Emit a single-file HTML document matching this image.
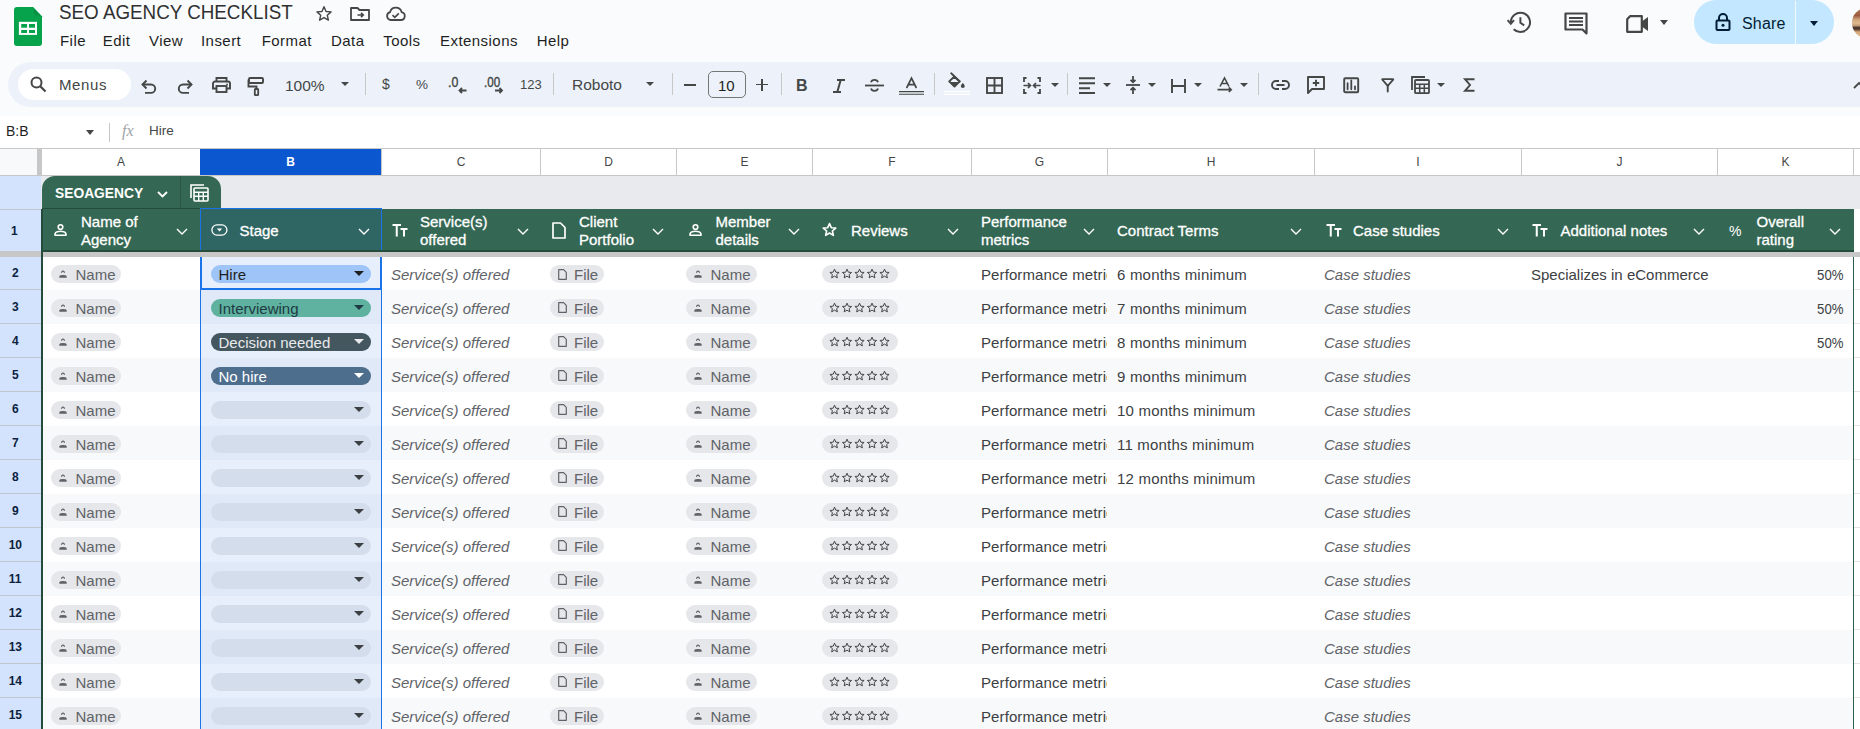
<!DOCTYPE html><html><head><meta charset="utf-8"><style>
*{margin:0;padding:0;box-sizing:border-box}
html,body{width:1860px;height:729px;overflow:hidden}
body{background:#f9fbfd;font-family:"Liberation Sans", sans-serif;position:relative;color:#1f1f1f}
.a{position:absolute}
.t{position:absolute;white-space:nowrap;line-height:1}
svg{position:absolute;overflow:visible}
.menu{font-size:15px;color:#1f1f1f;letter-spacing:0.45px}
.tb{position:absolute;left:8px;top:62px;width:1900px;height:45px;background:#edf2fa;border-radius:23px}
.sep{position:absolute;top:73px;width:1px;height:22px;background:#c7c7c7}
.tri{position:absolute;width:0;height:0;border-left:4.5px solid transparent;border-right:4.5px solid transparent;border-top:4.5px solid #444746}
.colh{position:absolute;top:148px;height:27px;background:#fff;border-top:1px solid #c7c7c7;border-bottom:1px solid #c7c7c7;border-left:1px solid #c7c7c7;font-size:12px;color:#444746;text-align:center;line-height:26px}
.rowh{position:absolute;left:0;width:41px;background:#d3e3fd;border-bottom:1px solid #c0c6ce;font-size:12px;font-weight:bold;color:#1f1f1f}
.row{position:absolute;left:43px;width:1810px;height:34px}
.chip{position:absolute;height:18px;border-radius:9px;background:#e6e7ea;font-size:15px;color:#5f6368;line-height:18px}
.cell{position:absolute;font-size:15px;letter-spacing:0.1px;line-height:1;white-space:nowrap;overflow:hidden}
.hd{position:absolute;color:#fff;font-size:15px;line-height:18px;white-space:nowrap;-webkit-text-stroke:0.3px #fff}
</style></head><body><svg style="left:14px;top:7px" width="28" height="39" viewBox="0 0 28 39">
<path d="M3 0H19.2L28 9.3V36A3 3 0 0 1 25 39H3A3 3 0 0 1 0 36V3A3 3 0 0 1 3 0Z" fill="#07a24c"/>
<path d="M19.5 2.5L25.5 8.5M19.5 5L23 8.5" stroke="#1c5a33" stroke-width="0.8" opacity="0.7"/>
<rect x="4.9" y="14.8" width="18.1" height="13.1" fill="#fff"/>
<rect x="7.2" y="17" width="5.9" height="3.7" fill="#07a24c"/><rect x="15" y="17" width="6" height="3.7" fill="#07a24c"/>
<rect x="7.2" y="23" width="5.9" height="3" fill="#07a24c"/><rect x="15" y="23" width="6" height="3" fill="#07a24c"/>
</svg>
<div class="t" style="left:58.5px;top:1.6px;font-size:20px;color:#303030;transform-origin:0 0;transform:scaleX(0.94)">SEO AGENCY CHECKLIST</div>
<svg style="left:314px;top:5px" width="20" height="17" viewBox="0 0 24 24"><path d="M12 2.5l2.9 6.6 7.1.6-5.4 4.7 1.6 7-6.2-3.7-6.2 3.7 1.6-7L2 9.7l7.1-.6z" fill="none" stroke="#444746" stroke-width="2" stroke-linejoin="round"/></svg>
<svg style="left:350px;top:7px" width="20" height="14" viewBox="0 0 20 14"><path d="M1 1H7.5L9.5 3H19V13H1Z" fill="none" stroke="#444746" stroke-width="1.8" stroke-linejoin="round"/><path d="M7.5 8H13M11 5.8L13.3 8 11 10.2" fill="none" stroke="#444746" stroke-width="1.6"/></svg>
<svg style="left:385px;top:7px" width="21" height="14" viewBox="0 0 21 14"><path d="M5.5 13H16a4 4 0 0 0 .6-7.9A6 6 0 0 0 5 5.2 4 4 0 0 0 5.5 13Z" fill="none" stroke="#444746" stroke-width="1.8"/><path d="M7.5 8.2l2.3 2.2 4-4" fill="none" stroke="#444746" stroke-width="1.6"/></svg>
<div class="t menu" style="left:60px;top:33px">File</div>
<div class="t menu" style="left:102.7px;top:33px">Edit</div>
<div class="t menu" style="left:149px;top:33px">View</div>
<div class="t menu" style="left:201px;top:33px">Insert</div>
<div class="t menu" style="left:261.7px;top:33px">Format</div>
<div class="t menu" style="left:331px;top:33px">Data</div>
<div class="t menu" style="left:383.3px;top:33px">Tools</div>
<div class="t menu" style="left:440px;top:33px">Extensions</div>
<div class="t menu" style="left:536.7px;top:33px">Help</div>
<svg style="left:1507px;top:10px" width="26" height="25" viewBox="0 0 26 25"><path d="M3.8 12.3A9.6 9.6 0 1 1 6.7 19.2" fill="none" stroke="#444746" stroke-width="2"/><path d="M0.6 10.2L3.8 13.8 7 10.2" fill="none" stroke="#444746" stroke-width="2"/><path d="M13.4 7.2V12.8L17.2 15.3" fill="none" stroke="#444746" stroke-width="2"/></svg>
<svg style="left:1564px;top:12px" width="24" height="23" viewBox="0 0 24 23"><path d="M1.5 1.5H22.5V21.5L18.5 17.5H1.5Z" fill="none" stroke="#444746" stroke-width="2.2" stroke-linejoin="round"/><rect x="5" y="5" width="14" height="2" fill="#444746"/><rect x="5" y="8.5" width="14" height="2" fill="#444746"/><rect x="5" y="12" width="14" height="2" fill="#444746"/></svg>
<svg style="left:1625px;top:15px" width="24" height="18" viewBox="0 0 24 18"><path d="M5 1.2H16.8V16.8H2.2V4.2Z" fill="none" stroke="#444746" stroke-width="2.2" stroke-linejoin="round"/><path d="M16.8 6.5L23 2V16L16.8 11.5Z" fill="#444746"/></svg>
<div class="tri" style="left:1660px;top:20px;border-width:5px 4px 0 4px;border-top-color:#444746"></div>
<div class="a" style="left:1694px;top:-0.5px;width:140px;height:44.5px;border-radius:22.3px;background:#c2e7ff"></div>
<div class="a" style="left:1795px;top:1px;width:1px;height:43px;background:#f0f8ff"></div>
<svg style="left:1715px;top:13px" width="16" height="18" viewBox="0 0 16 18"><path d="M4 7.5V5a4 4 0 0 1 8 0v2.5" fill="none" stroke="#001d35" stroke-width="2"/><rect x="1.5" y="7.5" width="13" height="9.5" rx="1" fill="none" stroke="#001d35" stroke-width="2"/><circle cx="8" cy="12.2" r="1.5" fill="#001d35"/></svg>
<div class="t" style="left:1742px;top:16px;font-size:16px;color:#001d35;letter-spacing:0.2px">Share</div>
<div class="tri" style="left:1810px;top:21px;border-width:5px 4.5px 0 4.5px;border-top-color:#001d35"></div>
<div class="a" style="left:1852px;top:8.3px;width:29.5px;height:29.5px;border-radius:50%;background:linear-gradient(180deg,#b47a5c 0%,#9a5a3e 25%,#cfa27a 38%,#e0bb90 50%,#c79f7a 58%,#3b2c26 66%,#6a4a38 72%,#d7ab7c 80%,#e3b584 100%)"></div>
<div class="tb"></div>
<div class="a" style="left:18px;top:69px;width:113px;height:31px;border-radius:16px;background:#fff"></div>
<svg style="left:30px;top:76px" width="17" height="17" viewBox="0 0 17 17"><circle cx="6.5" cy="6.5" r="5" fill="none" stroke="#444746" stroke-width="2"/><path d="M10.2 10.2L15.5 15.5" stroke="#444746" stroke-width="2.2"/></svg>
<div class="t" style="left:59px;top:77px;font-size:15px;color:#444746;letter-spacing:0.6px">Menus</div>
<svg style="left:141px;top:79px" width="16" height="14" viewBox="0 0 16 14"><path d="M2 5.5H10a4.2 4.2 0 0 1 0 8.4H4" fill="none" stroke="#444746" stroke-width="1.9"/><path d="M5.5 1.5L1.5 5.5 5.5 9.5" fill="none" stroke="#444746" stroke-width="1.9"/></svg>
<svg style="left:177px;top:79px" width="16" height="14" viewBox="0 0 16 14"><path d="M14 5.5H6a4.2 4.2 0 0 0 0 8.4H12" fill="none" stroke="#444746" stroke-width="1.9"/><path d="M10.5 1.5L14.5 5.5 10.5 9.5" fill="none" stroke="#444746" stroke-width="1.9"/></svg>
<svg style="left:212px;top:77px" width="19" height="16" viewBox="0 0 19 16"><path d="M4.5 4.5V1h10v3.5" fill="none" stroke="#444746" stroke-width="1.9"/><path d="M4.5 11.5H1V6.5a2 2 0 0 1 2-2h13a2 2 0 0 1 2 2v5h-3.5" fill="none" stroke="#444746" stroke-width="1.9"/><rect x="4.5" y="9" width="10" height="6" fill="none" stroke="#444746" stroke-width="1.9"/><circle cx="15" cy="7.3" r="0.9" fill="#444746"/></svg>
<svg style="left:248px;top:77px" width="16" height="19" viewBox="0 0 16 19"><rect x="1" y="1" width="14" height="5" rx="1" fill="none" stroke="#444746" stroke-width="1.9"/><path d="M1 3.5H0.5V9.5H8.5V12" fill="none" stroke="#444746" stroke-width="1.9"/><rect x="6.8" y="12" width="3.4" height="6.2" rx="0.6" fill="none" stroke="#444746" stroke-width="1.8"/></svg>
<div class="t" style="left:285px;top:78px;font-size:15.5px;color:#444746">100%</div>
<div class="tri" style="left:341px;top:82px"></div>
<div class="sep" style="left:365px"></div>
<div class="t" style="left:382px;top:77px;font-size:14px;color:#444746">$</div>
<div class="t" style="left:416px;top:78px;font-size:13.5px;color:#444746">%</div>
<svg style="left:448px;top:75px" width="21" height="19" viewBox="0 0 21 19"><text x="0" y="12" font-family="Liberation Sans" font-size="14.5" fill="#444746" transform="scale(0.85,1)" stroke="#444746" stroke-width="0.4">.0</text><path d="M18.5 15.5H11.5M14 13L11.5 15.5 14 18" fill="none" stroke="#444746" stroke-width="1.8"/></svg>
<svg style="left:484px;top:75px" width="21" height="19" viewBox="0 0 21 19"><text x="0" y="12" font-family="Liberation Sans" font-size="14.5" fill="#444746" transform="scale(0.8,1)" stroke="#444746" stroke-width="0.4">.00</text><path d="M11 15.5H18M15.5 13L18 15.5 15.5 18" fill="none" stroke="#444746" stroke-width="1.8"/></svg>
<div class="t" style="left:520px;top:78px;font-size:13px;color:#444746">123</div>
<div class="sep" style="left:553px"></div>
<div class="t" style="left:572px;top:77px;font-size:15.5px;color:#444746">Roboto</div>
<div class="tri" style="left:646px;top:82px"></div>
<div class="sep" style="left:672px"></div>
<div class="a" style="left:684px;top:84px;width:12px;height:1.8px;background:#444746"></div>
<div class="a" style="left:708px;top:71px;width:38px;height:27px;border:1.2px solid #747775;border-radius:5px"></div>
<div class="t" style="left:718px;top:78px;font-size:15px;color:#1f1f1f">10</div>
<div class="a" style="left:756px;top:83.6px;width:12px;height:1.8px;background:#444746"></div><div class="a" style="left:761.1px;top:78.5px;width:1.8px;height:12px;background:#444746"></div>
<div class="sep" style="left:781px"></div>
<div class="t" style="left:796px;top:78px;font-size:16px;font-weight:bold;color:#444746">B</div>
<svg style="left:832px;top:78.6px" width="14" height="14" viewBox="0 0 14 14"><path d="M5 1H13M1 13H9M8.7 1L5.3 13" fill="none" stroke="#444746" stroke-width="2"/></svg>
<svg style="left:865px;top:78px" width="19" height="15" viewBox="0 0 19 15"><path d="M0 7.5H19" stroke="#444746" stroke-width="1.8"/><path d="M13 4.2a3.6 3 0 0 0-7 0M6 10.5a3.6 3 0 0 0 7 0" fill="none" stroke="#444746" stroke-width="1.8"/></svg>
<svg style="left:899px;top:77px" width="25" height="18" viewBox="0 0 25 18"><path d="M7.6 11L12.5 1.2 17.4 11M9.3 7.6H15.7" fill="none" stroke="#444746" stroke-width="1.7"/><path d="M0 14.6H25M0 17.3H25" stroke="#444746" stroke-width="1.05"/></svg>
<div class="sep" style="left:934px"></div>
<svg style="left:944px;top:72px" width="27" height="24" viewBox="0 0 27 24"><path d="M7.2 1.3L15.7 9.4" stroke="#444746" stroke-width="1.9" stroke-linecap="round"/><path d="M5.2 9.4L10.2 4.8 15.7 9.4 10.5 14.6Z" fill="none" stroke="#444746" stroke-width="1.9" stroke-linejoin="round"/><path d="M5 9.9H15.6L10.5 14.8Z" fill="#444746"/><path d="M18.8 11C19.9 12.2 20.8 13.2 20.8 14.1a2 2 0 0 1-4 0C16.8 13.2 17.7 12.2 18.8 11Z" fill="#444746"/><path d="M0 19.6H26M0 22.4H26" stroke="#fff" stroke-width="1.3"/></svg>
<svg style="left:986px;top:77px" width="17" height="17" viewBox="0 0 17 17"><rect x="1" y="1" width="15" height="15" fill="none" stroke="#444746" stroke-width="1.9"/><path d="M8.5 1V16M1 8.5H16" stroke="#444746" stroke-width="1.9"/></svg>
<svg style="left:1023px;top:77px" width="18" height="17" viewBox="0 0 18 17"><path d="M3.5 1H1V5M1 12V16H3.5M14.5 1H17V5M17 12V16H14.5" fill="none" stroke="#444746" stroke-width="1.8"/><path d="M0.5 8.5H7.5M5 6L7.5 8.5 5 11M17.5 8.5H10.5M13 6L10.5 8.5 13 11" fill="none" stroke="#444746" stroke-width="1.7"/></svg>
<div class="tri" style="left:1051px;top:83px"></div>
<div class="sep" style="left:1067px"></div>
<svg style="left:1079px;top:77px" width="16" height="17" viewBox="0 0 16 17"><path d="M0 1.2H16M0 6.2H16M0 11.2H11M0 16H16" stroke="#444746" stroke-width="2"/></svg>
<div class="tri" style="left:1103px;top:83px"></div>
<svg style="left:1126px;top:76px" width="14" height="18" viewBox="0 0 14 18"><path d="M0 9H14" stroke="#444746" stroke-width="1.8"/><path d="M7 0V6M4.5 3.8L7 6.3 9.5 3.8M7 18V12M4.5 14.2L7 11.7 9.5 14.2" fill="none" stroke="#444746" stroke-width="1.8"/></svg>
<div class="tri" style="left:1148px;top:83px"></div>
<svg style="left:1171px;top:79px" width="15" height="14" viewBox="0 0 15 14"><path d="M1 0V14M14 0V14M1 7H14" stroke="#444746" stroke-width="1.9"/></svg>
<div class="tri" style="left:1194px;top:83px"></div>
<svg style="left:1217px;top:77px" width="16" height="16" viewBox="0 0 16 16"><path d="M3 9.5L7.5 1 12 9.5M4.6 6.5H10.4" fill="none" stroke="#444746" stroke-width="1.6"/><path d="M0.5 12.7H14M11.8 10.4L14.2 12.7 11.8 15" fill="none" stroke="#444746" stroke-width="1.7"/></svg>
<div class="tri" style="left:1240px;top:83px"></div>
<div class="sep" style="left:1258px"></div>
<svg style="left:1271px;top:80px" width="19" height="10" viewBox="0 0 19 10"><path d="M8 1H5a4 4 0 0 0 0 8h3M11 1h3a4 4 0 0 1 0 8h-3M5.5 5H13.5" fill="none" stroke="#444746" stroke-width="1.9"/></svg>
<svg style="left:1307px;top:76px" width="18" height="18" viewBox="0 0 18 18"><path d="M1 17V1H17V13H5Z" fill="none" stroke="#444746" stroke-width="1.9" stroke-linejoin="round"/><path d="M9 3.8V10.2M5.8 7H12.2" stroke="#444746" stroke-width="1.9"/></svg>
<svg style="left:1343px;top:77px" width="17" height="17" viewBox="0 0 17 17"><rect x="1.2" y="1.2" width="14" height="14" rx="1" fill="none" stroke="#444746" stroke-width="1.9"/><path d="M4.6 6.2V12.3M8.3 3.5V12.3M12 9.3V12.3" stroke="#444746" stroke-width="1.8" stroke-linecap="round"/></svg>
<svg style="left:1381px;top:78px" width="14" height="14" viewBox="0 0 14 14"><path d="M0.9 1.1H12.6L6.75 7.8Z" fill="none" stroke="#444746" stroke-width="1.8" stroke-linejoin="bevel"/><path d="M6.75 7.5V13.5" stroke="#444746" stroke-width="1.9" stroke-linecap="round"/></svg>
<svg style="left:1411px;top:76px" width="19" height="18" viewBox="0 0 19 18"><path d="M1 14V1H14" fill="none" stroke="#444746" stroke-width="1.8"/><rect x="4" y="4" width="14" height="13.2" rx="1" fill="none" stroke="#444746" stroke-width="1.8"/><path d="M4 8.3H18M4 12.2H18M8.7 8.3V17M13.3 8.3V17" stroke="#444746" stroke-width="1.5"/></svg>
<div class="tri" style="left:1437px;top:83px"></div>
<svg style="left:1464px;top:78px" width="11" height="14" viewBox="0 0 11 14"><path d="M10.5 1.2H1L6 7 1 12.8H10.5" fill="none" stroke="#444746" stroke-width="1.9"/></svg>
<svg style="left:1853px;top:82px" width="12" height="7" viewBox="0 0 12 7"><path d="M1 6L6 1 11 6" fill="none" stroke="#444746" stroke-width="1.8"/></svg>
<div class="a" style="left:0;top:116px;width:1860px;height:33px;background:#fff"></div>
<div class="t" style="left:6px;top:124px;font-size:14px;color:#1f1f1f">B:B</div>
<div class="tri" style="left:86px;top:130px;border-width:5px 4.5px 0 4.5px"></div>
<div class="a" style="left:109px;top:123px;width:1px;height:19px;background:#c7c7c7"></div>
<div class="t" style="left:122px;top:123px;font-size:16px;font-style:italic;color:#a0a4a8;font-family:'Liberation Serif',serif">fx</div>
<div class="t" style="left:149px;top:124px;font-size:13.5px;color:#444746">Hire</div>
<div class="a" style="left:0;top:148px;width:1860px;height:1px;background:#c7c7c7"></div>
<div class="a" style="left:0;top:149px;width:37px;height:26px;background:#f8f9fa"></div>
<div class="a" style="left:37px;top:149px;width:4.5px;height:26px;background:#c7c7c7"></div>
<div class="a" style="left:41px;top:149px;width:159px;height:26px;background:#fff;border-left:1px solid #c7c7c7;color:#444746;font-size:12px;text-align:center;line-height:26px">A</div>
<div class="a" style="left:200px;top:149px;width:181px;height:26px;background:#0b57d0;color:#fff;font-size:12px;font-weight:bold;text-align:center;line-height:26px">B</div>
<div class="a" style="left:381px;top:149px;width:159px;height:26px;background:#fff;border-left:1px solid #c7c7c7;color:#444746;font-size:12px;text-align:center;line-height:26px">C</div>
<div class="a" style="left:540px;top:149px;width:136px;height:26px;background:#fff;border-left:1px solid #c7c7c7;color:#444746;font-size:12px;text-align:center;line-height:26px">D</div>
<div class="a" style="left:676px;top:149px;width:136px;height:26px;background:#fff;border-left:1px solid #c7c7c7;color:#444746;font-size:12px;text-align:center;line-height:26px">E</div>
<div class="a" style="left:812px;top:149px;width:159px;height:26px;background:#fff;border-left:1px solid #c7c7c7;color:#444746;font-size:12px;text-align:center;line-height:26px">F</div>
<div class="a" style="left:971px;top:149px;width:136px;height:26px;background:#fff;border-left:1px solid #c7c7c7;color:#444746;font-size:12px;text-align:center;line-height:26px">G</div>
<div class="a" style="left:1107px;top:149px;width:207px;height:26px;background:#fff;border-left:1px solid #c7c7c7;color:#444746;font-size:12px;text-align:center;line-height:26px">H</div>
<div class="a" style="left:1314px;top:149px;width:207px;height:26px;background:#fff;border-left:1px solid #c7c7c7;color:#444746;font-size:12px;text-align:center;line-height:26px">I</div>
<div class="a" style="left:1521px;top:149px;width:196px;height:26px;background:#fff;border-left:1px solid #c7c7c7;color:#444746;font-size:12px;text-align:center;line-height:26px">J</div>
<div class="a" style="left:1717px;top:149px;width:136px;height:26px;background:#fff;border-left:1px solid #c7c7c7;color:#444746;font-size:12px;text-align:center;line-height:26px">K</div>
<div class="a" style="left:1853px;top:149px;width:47px;height:26px;background:#fff;border-left:1px solid #c7c7c7;color:#444746;font-size:12px;text-align:center;line-height:26px"></div>
<div class="a" style="left:0;top:175px;width:1860px;height:1px;background:#c7c7c7"></div>
<div class="a" style="left:0;top:176px;width:41px;height:33px;background:#d3e3fd"></div>
<div class="a" style="left:0;top:209px;width:41px;height:1px;background:#c0c6ce"></div>
<div class="a" style="left:41px;top:176px;width:1819px;height:33px;background:#e8eaed"></div>
<div class="a" style="left:42px;top:176px;width:179px;height:34px;background:#356854;border-radius:13px 13px 0 0"></div>
<div class="a" style="left:180px;top:176px;width:1px;height:33px;background:#2a5443"></div>
<div class="t" style="left:55px;top:186.5px;font-size:13.8px;font-weight:bold;color:#fff">SEOAGENCY</div>
<svg style="left:157px;top:191px" width="11" height="7" viewBox="0 0 11 7"><path d="M1 1L5.5 5.5 10 1" fill="none" stroke="#fff" stroke-width="1.8"/></svg>
<svg style="left:190px;top:184px" width="19" height="18" viewBox="0 0 19 18"><path d="M1 14V1H14" fill="none" stroke="#fff" stroke-width="1.6"/><rect x="4" y="4" width="14" height="13" rx="1" fill="none" stroke="#fff" stroke-width="1.6"/><path d="M4 8.3H18M4 12.2H18M8.7 8.3V17M13.3 8.3V17" stroke="#fff" stroke-width="1.4"/></svg>
<div class="a" style="left:0;top:210px;width:41px;height:41px;background:#d3e3fd"></div>
<div class="t" style="left:11px;top:225px;font-size:12px;font-weight:bold;color:#0b1f3f">1</div>
<div class="a" style="left:41px;top:208.5px;width:1813px;height:42.5px;background:#356854"></div>
<div class="a" style="left:42px;top:208px;width:179px;height:1.2px;background:#254b3b"></div>
<div class="a" style="left:200px;top:208px;width:182px;height:43px;background:#2f6563;border-left:1.3px solid #1a73e8;border-right:1.3px solid #1a73e8;border-top:1.3px solid #1a73e8"></div>
<svg style="left:53.5px;top:224px" width="13" height="12" viewBox="0 0 13 12"><circle cx="6.5" cy="3" r="2.3" fill="none" stroke="#fff" stroke-width="1.6"/><path d="M1 11.2V10a3 3 0 0 1 2.2-2.3 13 13 0 0 1 6.6 0A3 3 0 0 1 12 10v1.2Z" fill="none" stroke="#fff" stroke-width="1.6" stroke-linejoin="round"/></svg>
<div class="hd" style="left:81px;top:212.5px">Name of<br>Agency</div>
<svg style="left:176px;top:228px" width="12" height="7" viewBox="0 0 12 7"><path d="M1 1L6 6 11 1" fill="none" stroke="#fff" stroke-width="1.4"/></svg>
<svg style="left:211px;top:224px" width="17" height="12" viewBox="0 0 17 12"><rect x="0.9" y="0.9" width="15" height="10.2" rx="5" fill="none" stroke="#fff" stroke-width="1.3"/><path d="M5.8 4.6H11.2L8.5 7.4Z" fill="#fff"/></svg>
<div class="hd" style="left:239.5px;top:221.5px">Stage</div>
<svg style="left:357.5px;top:228px" width="12" height="7" viewBox="0 0 12 7"><path d="M1 1L6 6 11 1" fill="none" stroke="#fff" stroke-width="1.4"/></svg>
<svg style="left:392px;top:224px" width="16" height="13" viewBox="0 0 16 13"><path d="M0.5 1H9M4.75 1V12.5M8.5 5H15.5M12 5V12.5" fill="none" stroke="#fff" stroke-width="2"/></svg>
<div class="hd" style="left:420px;top:212.5px">Service(s)<br>offered</div>
<svg style="left:516.5px;top:228px" width="12" height="7" viewBox="0 0 12 7"><path d="M1 1L6 6 11 1" fill="none" stroke="#fff" stroke-width="1.4"/></svg>
<svg style="left:552px;top:222px" width="14" height="17" viewBox="0 0 14 17"><path d="M1 1H8.5L13 5.5V16H1Z" fill="none" stroke="#fff" stroke-width="1.7" stroke-linejoin="round"/></svg>
<div class="hd" style="left:579px;top:212.5px">Client<br>Portfolio</div>
<svg style="left:652px;top:228px" width="12" height="7" viewBox="0 0 12 7"><path d="M1 1L6 6 11 1" fill="none" stroke="#fff" stroke-width="1.4"/></svg>
<svg style="left:688.5px;top:224px" width="13" height="12" viewBox="0 0 13 12"><circle cx="6.5" cy="3" r="2.3" fill="none" stroke="#fff" stroke-width="1.6"/><path d="M1 11.2V10a3 3 0 0 1 2.2-2.3 13 13 0 0 1 6.6 0A3 3 0 0 1 12 10v1.2Z" fill="none" stroke="#fff" stroke-width="1.6" stroke-linejoin="round"/></svg>
<div class="hd" style="left:715.5px;top:212.5px">Member<br>details</div>
<svg style="left:788px;top:228px" width="12" height="7" viewBox="0 0 12 7"><path d="M1 1L6 6 11 1" fill="none" stroke="#fff" stroke-width="1.4"/></svg>
<svg style="left:822px;top:222px" width="15" height="15" viewBox="0 0 24 24"><path d="M12 2.5l2.9 6.6 7.1.6-5.4 4.7 1.6 7-6.2-3.7-6.2 3.7 1.6-7L2 9.7l7.1-.6z" fill="none" stroke="#fff" stroke-width="2.6" stroke-linejoin="round"/></svg>
<div class="hd" style="left:851px;top:221.5px">Reviews</div>
<svg style="left:947px;top:228px" width="12" height="7" viewBox="0 0 12 7"><path d="M1 1L6 6 11 1" fill="none" stroke="#fff" stroke-width="1.4"/></svg>
<div class="hd" style="left:981px;top:212.5px">Performance<br>metrics</div>
<svg style="left:1083px;top:228px" width="12" height="7" viewBox="0 0 12 7"><path d="M1 1L6 6 11 1" fill="none" stroke="#fff" stroke-width="1.4"/></svg>
<div class="hd" style="left:1117px;top:221.5px">Contract Terms</div>
<svg style="left:1290px;top:228px" width="12" height="7" viewBox="0 0 12 7"><path d="M1 1L6 6 11 1" fill="none" stroke="#fff" stroke-width="1.4"/></svg>
<svg style="left:1325.5px;top:224px" width="16" height="13" viewBox="0 0 16 13"><path d="M0.5 1H9M4.75 1V12.5M8.5 5H15.5M12 5V12.5" fill="none" stroke="#fff" stroke-width="2"/></svg>
<div class="hd" style="left:1353px;top:221.5px">Case studies</div>
<svg style="left:1497px;top:228px" width="12" height="7" viewBox="0 0 12 7"><path d="M1 1L6 6 11 1" fill="none" stroke="#fff" stroke-width="1.4"/></svg>
<svg style="left:1532px;top:224px" width="16" height="13" viewBox="0 0 16 13"><path d="M0.5 1H9M4.75 1V12.5M8.5 5H15.5M12 5V12.5" fill="none" stroke="#fff" stroke-width="2"/></svg>
<div class="hd" style="left:1560.5px;top:221.5px">Additional notes</div>
<svg style="left:1693px;top:228px" width="12" height="7" viewBox="0 0 12 7"><path d="M1 1L6 6 11 1" fill="none" stroke="#fff" stroke-width="1.4"/></svg>
<div class="t" style="left:1729px;top:224px;font-size:14px;color:#fff">%</div>
<div class="hd" style="left:1756.5px;top:212.5px">Overall<br>rating</div>
<svg style="left:1829px;top:228px" width="12" height="7" viewBox="0 0 12 7"><path d="M1 1L6 6 11 1" fill="none" stroke="#fff" stroke-width="1.4"/></svg>
<div class="a" style="left:41px;top:250.2px;width:1813px;height:1.4px;background:#254b3b"></div>
<div class="a" style="left:0;top:251.6px;width:1860px;height:5.4px;background:#c7c7c7"></div>
<div class="a" style="left:0;top:251px;width:41px;height:6px;background:#c7c7c7"></div>
<div class="a" style="left:0;top:257px;width:41px;height:33.4px;background:#d3e3fd"></div>
<div class="a" style="left:0;top:289.40px;width:41px;height:1px;background:#c0c6ce"></div>
<div class="t" style="left:12.1px;top:266.90px;font-size:12px;font-weight:bold;color:#0b1f3f">2</div>
<div class="a" style="left:43px;top:257px;width:1810px;height:33.4px;background:#fff"></div>
<div class="a" style="left:200px;top:257px;width:181px;height:33.4px;background:#e7effc"></div>
<div class="chip" style="left:51px;top:265.1px;width:70px"></div>
<svg style="left:59px;top:270.0px" width="8" height="8" viewBox="0 0 8 8"><path d="M2.7 2.8a1.35 1.35 0 1 1 2.6 0" fill="none" stroke="#5f6368" stroke-width="1.1"/><path d="M0.3 7.7V6.6a1.6 1.6 0 0 1 1.2-1.4 10 10 0 0 1 5 0 1.6 1.6 0 0 1 1.2 1.4v1.1Z" fill="#5f6368"/></svg>
<div class="t" style="left:75.5px;top:267.40px;font-size:15px;color:#5f6368">Name</div>
<div class="chip" style="left:211px;top:265.1px;width:160px;background:#9fc5f8"></div>
<div class="t" style="left:218.5px;top:267.40px;font-size:15px;color:#1f1f1f">Hire</div>
<div class="tri" style="left:353.7px;top:271.40px;border-width:5.1px 5.2px 0 5.2px;border-top-color:#1f1f1f"></div>
<div class="t" style="left:391px;top:267.40px;font-size:15px;font-style:italic;color:#5f6368">Service(s) offered</div>
<div class="chip" style="left:550px;top:265.1px;width:54px"></div>
<svg style="left:558px;top:268.7px" width="9" height="11" viewBox="0 0 9 11"><path d="M0.7 0.7H5.6L8.3 3.4V10.3H0.7Z" fill="none" stroke="#5f6368" stroke-width="1.2" stroke-linejoin="round"/></svg>
<div class="t" style="left:574px;top:267.40px;font-size:15px;color:#5f6368">File</div>
<div class="chip" style="left:686px;top:265.1px;width:70.5px"></div>
<svg style="left:694px;top:270.0px" width="8" height="8" viewBox="0 0 8 8"><path d="M2.7 2.8a1.35 1.35 0 1 1 2.6 0" fill="none" stroke="#5f6368" stroke-width="1.1"/><path d="M0.3 7.7V6.6a1.6 1.6 0 0 1 1.2-1.4 10 10 0 0 1 5 0 1.6 1.6 0 0 1 1.2 1.4v1.1Z" fill="#5f6368"/></svg>
<div class="t" style="left:710.5px;top:267.40px;font-size:15px;color:#5f6368">Name</div>
<div class="chip" style="left:822px;top:265.1px;width:75.5px"></div>
<svg style="left:829.2px;top:268.40px" width="62" height="12" viewBox="0 0 62 12"><path transform="translate(0.0,0) scale(0.46)" d="M12 2.5l2.9 6.6 7.1.6-5.4 4.7 1.6 7-6.2-3.7-6.2 3.7 1.6-7L2 9.7l7.1-.6z" fill="none" stroke="#3c4043" stroke-width="2.1" stroke-linejoin="miter"/><path transform="translate(12.5,0) scale(0.46)" d="M12 2.5l2.9 6.6 7.1.6-5.4 4.7 1.6 7-6.2-3.7-6.2 3.7 1.6-7L2 9.7l7.1-.6z" fill="none" stroke="#3c4043" stroke-width="2.1" stroke-linejoin="miter"/><path transform="translate(25.0,0) scale(0.46)" d="M12 2.5l2.9 6.6 7.1.6-5.4 4.7 1.6 7-6.2-3.7-6.2 3.7 1.6-7L2 9.7l7.1-.6z" fill="none" stroke="#3c4043" stroke-width="2.1" stroke-linejoin="miter"/><path transform="translate(37.5,0) scale(0.46)" d="M12 2.5l2.9 6.6 7.1.6-5.4 4.7 1.6 7-6.2-3.7-6.2 3.7 1.6-7L2 9.7l7.1-.6z" fill="none" stroke="#3c4043" stroke-width="2.1" stroke-linejoin="miter"/><path transform="translate(50.0,0) scale(0.46)" d="M12 2.5l2.9 6.6 7.1.6-5.4 4.7 1.6 7-6.2-3.7-6.2 3.7 1.6-7L2 9.7l7.1-.6z" fill="none" stroke="#3c4043" stroke-width="2.1" stroke-linejoin="miter"/></svg>
<div class="cell" style="left:981px;top:266.40px;width:125.6px;height:17px;color:#3c4043;line-height:17px">Performance metrics</div>
<div class="t" style="left:1117px;top:267.40px;font-size:15px;letter-spacing:0.2px;color:#3c4043">6 months minimum</div>
<div class="t" style="left:1324px;top:267.40px;font-size:15px;font-style:italic;color:#5f6368">Case studies</div>
<div class="t" style="left:1531px;top:267.40px;font-size:15px;color:#3c4043">Specializes in eCommerce</div>
<div class="t" style="left:1800px;width:43.5px;text-align:right;top:267.40px;font-size:15px;color:#3c4043;transform-origin:100% 0;transform:scaleX(0.88)">50%</div>
<div class="a" style="left:0;top:290.4px;width:41px;height:34.0px;background:#d3e3fd"></div>
<div class="a" style="left:0;top:323.40px;width:41px;height:1px;background:#c0c6ce"></div>
<div class="t" style="left:12.1px;top:300.60px;font-size:12px;font-weight:bold;color:#0b1f3f">3</div>
<div class="a" style="left:43px;top:290.4px;width:1810px;height:34.0px;background:#f8f9fa"></div>
<div class="a" style="left:200px;top:290.4px;width:181px;height:34.0px;background:#e0e9f7"></div>
<div class="chip" style="left:51px;top:298.8px;width:70px"></div>
<svg style="left:59px;top:303.7px" width="8" height="8" viewBox="0 0 8 8"><path d="M2.7 2.8a1.35 1.35 0 1 1 2.6 0" fill="none" stroke="#5f6368" stroke-width="1.1"/><path d="M0.3 7.7V6.6a1.6 1.6 0 0 1 1.2-1.4 10 10 0 0 1 5 0 1.6 1.6 0 0 1 1.2 1.4v1.1Z" fill="#5f6368"/></svg>
<div class="t" style="left:75.5px;top:301.10px;font-size:15px;color:#5f6368">Name</div>
<div class="chip" style="left:211px;top:298.8px;width:160px;background:#5eb29f"></div>
<div class="t" style="left:218.5px;top:301.10px;font-size:15px;color:#1f3a44">Interviewing</div>
<div class="tri" style="left:353.7px;top:305.10px;border-width:5.1px 5.2px 0 5.2px;border-top-color:#1f3a44"></div>
<div class="t" style="left:391px;top:301.10px;font-size:15px;font-style:italic;color:#5f6368">Service(s) offered</div>
<div class="chip" style="left:550px;top:298.8px;width:54px"></div>
<svg style="left:558px;top:302.4px" width="9" height="11" viewBox="0 0 9 11"><path d="M0.7 0.7H5.6L8.3 3.4V10.3H0.7Z" fill="none" stroke="#5f6368" stroke-width="1.2" stroke-linejoin="round"/></svg>
<div class="t" style="left:574px;top:301.10px;font-size:15px;color:#5f6368">File</div>
<div class="chip" style="left:686px;top:298.8px;width:70.5px"></div>
<svg style="left:694px;top:303.7px" width="8" height="8" viewBox="0 0 8 8"><path d="M2.7 2.8a1.35 1.35 0 1 1 2.6 0" fill="none" stroke="#5f6368" stroke-width="1.1"/><path d="M0.3 7.7V6.6a1.6 1.6 0 0 1 1.2-1.4 10 10 0 0 1 5 0 1.6 1.6 0 0 1 1.2 1.4v1.1Z" fill="#5f6368"/></svg>
<div class="t" style="left:710.5px;top:301.10px;font-size:15px;color:#5f6368">Name</div>
<div class="chip" style="left:822px;top:298.8px;width:75.5px"></div>
<svg style="left:829.2px;top:302.10px" width="62" height="12" viewBox="0 0 62 12"><path transform="translate(0.0,0) scale(0.46)" d="M12 2.5l2.9 6.6 7.1.6-5.4 4.7 1.6 7-6.2-3.7-6.2 3.7 1.6-7L2 9.7l7.1-.6z" fill="none" stroke="#3c4043" stroke-width="2.1" stroke-linejoin="miter"/><path transform="translate(12.5,0) scale(0.46)" d="M12 2.5l2.9 6.6 7.1.6-5.4 4.7 1.6 7-6.2-3.7-6.2 3.7 1.6-7L2 9.7l7.1-.6z" fill="none" stroke="#3c4043" stroke-width="2.1" stroke-linejoin="miter"/><path transform="translate(25.0,0) scale(0.46)" d="M12 2.5l2.9 6.6 7.1.6-5.4 4.7 1.6 7-6.2-3.7-6.2 3.7 1.6-7L2 9.7l7.1-.6z" fill="none" stroke="#3c4043" stroke-width="2.1" stroke-linejoin="miter"/><path transform="translate(37.5,0) scale(0.46)" d="M12 2.5l2.9 6.6 7.1.6-5.4 4.7 1.6 7-6.2-3.7-6.2 3.7 1.6-7L2 9.7l7.1-.6z" fill="none" stroke="#3c4043" stroke-width="2.1" stroke-linejoin="miter"/><path transform="translate(50.0,0) scale(0.46)" d="M12 2.5l2.9 6.6 7.1.6-5.4 4.7 1.6 7-6.2-3.7-6.2 3.7 1.6-7L2 9.7l7.1-.6z" fill="none" stroke="#3c4043" stroke-width="2.1" stroke-linejoin="miter"/></svg>
<div class="cell" style="left:981px;top:300.10px;width:125.6px;height:17px;color:#3c4043;line-height:17px">Performance metrics</div>
<div class="t" style="left:1117px;top:301.10px;font-size:15px;letter-spacing:0.2px;color:#3c4043">7 months minimum</div>
<div class="t" style="left:1324px;top:301.10px;font-size:15px;font-style:italic;color:#5f6368">Case studies</div>
<div class="t" style="left:1800px;width:43.5px;text-align:right;top:301.10px;font-size:15px;color:#3c4043;transform-origin:100% 0;transform:scaleX(0.88)">50%</div>
<div class="a" style="left:0;top:324.4px;width:41px;height:34.0px;background:#d3e3fd"></div>
<div class="a" style="left:0;top:357.40px;width:41px;height:1px;background:#c0c6ce"></div>
<div class="t" style="left:12.1px;top:334.60px;font-size:12px;font-weight:bold;color:#0b1f3f">4</div>
<div class="a" style="left:43px;top:324.4px;width:1810px;height:34.0px;background:#fff"></div>
<div class="a" style="left:200px;top:324.4px;width:181px;height:34.0px;background:#e7effc"></div>
<div class="chip" style="left:51px;top:332.8px;width:70px"></div>
<svg style="left:59px;top:337.7px" width="8" height="8" viewBox="0 0 8 8"><path d="M2.7 2.8a1.35 1.35 0 1 1 2.6 0" fill="none" stroke="#5f6368" stroke-width="1.1"/><path d="M0.3 7.7V6.6a1.6 1.6 0 0 1 1.2-1.4 10 10 0 0 1 5 0 1.6 1.6 0 0 1 1.2 1.4v1.1Z" fill="#5f6368"/></svg>
<div class="t" style="left:75.5px;top:335.10px;font-size:15px;color:#5f6368">Name</div>
<div class="chip" style="left:211px;top:332.8px;width:160px;background:#44575f"></div>
<div class="t" style="left:218.5px;top:335.10px;font-size:15px;color:#e8eaed">Decision needed</div>
<div class="tri" style="left:353.7px;top:339.10px;border-width:5.1px 5.2px 0 5.2px;border-top-color:#e8eaed"></div>
<div class="t" style="left:391px;top:335.10px;font-size:15px;font-style:italic;color:#5f6368">Service(s) offered</div>
<div class="chip" style="left:550px;top:332.8px;width:54px"></div>
<svg style="left:558px;top:336.4px" width="9" height="11" viewBox="0 0 9 11"><path d="M0.7 0.7H5.6L8.3 3.4V10.3H0.7Z" fill="none" stroke="#5f6368" stroke-width="1.2" stroke-linejoin="round"/></svg>
<div class="t" style="left:574px;top:335.10px;font-size:15px;color:#5f6368">File</div>
<div class="chip" style="left:686px;top:332.8px;width:70.5px"></div>
<svg style="left:694px;top:337.7px" width="8" height="8" viewBox="0 0 8 8"><path d="M2.7 2.8a1.35 1.35 0 1 1 2.6 0" fill="none" stroke="#5f6368" stroke-width="1.1"/><path d="M0.3 7.7V6.6a1.6 1.6 0 0 1 1.2-1.4 10 10 0 0 1 5 0 1.6 1.6 0 0 1 1.2 1.4v1.1Z" fill="#5f6368"/></svg>
<div class="t" style="left:710.5px;top:335.10px;font-size:15px;color:#5f6368">Name</div>
<div class="chip" style="left:822px;top:332.8px;width:75.5px"></div>
<svg style="left:829.2px;top:336.10px" width="62" height="12" viewBox="0 0 62 12"><path transform="translate(0.0,0) scale(0.46)" d="M12 2.5l2.9 6.6 7.1.6-5.4 4.7 1.6 7-6.2-3.7-6.2 3.7 1.6-7L2 9.7l7.1-.6z" fill="none" stroke="#3c4043" stroke-width="2.1" stroke-linejoin="miter"/><path transform="translate(12.5,0) scale(0.46)" d="M12 2.5l2.9 6.6 7.1.6-5.4 4.7 1.6 7-6.2-3.7-6.2 3.7 1.6-7L2 9.7l7.1-.6z" fill="none" stroke="#3c4043" stroke-width="2.1" stroke-linejoin="miter"/><path transform="translate(25.0,0) scale(0.46)" d="M12 2.5l2.9 6.6 7.1.6-5.4 4.7 1.6 7-6.2-3.7-6.2 3.7 1.6-7L2 9.7l7.1-.6z" fill="none" stroke="#3c4043" stroke-width="2.1" stroke-linejoin="miter"/><path transform="translate(37.5,0) scale(0.46)" d="M12 2.5l2.9 6.6 7.1.6-5.4 4.7 1.6 7-6.2-3.7-6.2 3.7 1.6-7L2 9.7l7.1-.6z" fill="none" stroke="#3c4043" stroke-width="2.1" stroke-linejoin="miter"/><path transform="translate(50.0,0) scale(0.46)" d="M12 2.5l2.9 6.6 7.1.6-5.4 4.7 1.6 7-6.2-3.7-6.2 3.7 1.6-7L2 9.7l7.1-.6z" fill="none" stroke="#3c4043" stroke-width="2.1" stroke-linejoin="miter"/></svg>
<div class="cell" style="left:981px;top:334.10px;width:125.6px;height:17px;color:#3c4043;line-height:17px">Performance metrics</div>
<div class="t" style="left:1117px;top:335.10px;font-size:15px;letter-spacing:0.2px;color:#3c4043">8 months minimum</div>
<div class="t" style="left:1324px;top:335.10px;font-size:15px;font-style:italic;color:#5f6368">Case studies</div>
<div class="t" style="left:1800px;width:43.5px;text-align:right;top:335.10px;font-size:15px;color:#3c4043;transform-origin:100% 0;transform:scaleX(0.88)">50%</div>
<div class="a" style="left:0;top:358.4px;width:41px;height:34.0px;background:#d3e3fd"></div>
<div class="a" style="left:0;top:391.40px;width:41px;height:1px;background:#c0c6ce"></div>
<div class="t" style="left:12.1px;top:368.60px;font-size:12px;font-weight:bold;color:#0b1f3f">5</div>
<div class="a" style="left:43px;top:358.4px;width:1810px;height:34.0px;background:#f8f9fa"></div>
<div class="a" style="left:200px;top:358.4px;width:181px;height:34.0px;background:#e0e9f7"></div>
<div class="chip" style="left:51px;top:366.8px;width:70px"></div>
<svg style="left:59px;top:371.7px" width="8" height="8" viewBox="0 0 8 8"><path d="M2.7 2.8a1.35 1.35 0 1 1 2.6 0" fill="none" stroke="#5f6368" stroke-width="1.1"/><path d="M0.3 7.7V6.6a1.6 1.6 0 0 1 1.2-1.4 10 10 0 0 1 5 0 1.6 1.6 0 0 1 1.2 1.4v1.1Z" fill="#5f6368"/></svg>
<div class="t" style="left:75.5px;top:369.10px;font-size:15px;color:#5f6368">Name</div>
<div class="chip" style="left:211px;top:366.8px;width:160px;background:#4e6e8e"></div>
<div class="t" style="left:218.5px;top:369.10px;font-size:15px;color:#fff">No hire</div>
<div class="tri" style="left:353.7px;top:373.10px;border-width:5.1px 5.2px 0 5.2px;border-top-color:#fff"></div>
<div class="t" style="left:391px;top:369.10px;font-size:15px;font-style:italic;color:#5f6368">Service(s) offered</div>
<div class="chip" style="left:550px;top:366.8px;width:54px"></div>
<svg style="left:558px;top:370.4px" width="9" height="11" viewBox="0 0 9 11"><path d="M0.7 0.7H5.6L8.3 3.4V10.3H0.7Z" fill="none" stroke="#5f6368" stroke-width="1.2" stroke-linejoin="round"/></svg>
<div class="t" style="left:574px;top:369.10px;font-size:15px;color:#5f6368">File</div>
<div class="chip" style="left:686px;top:366.8px;width:70.5px"></div>
<svg style="left:694px;top:371.7px" width="8" height="8" viewBox="0 0 8 8"><path d="M2.7 2.8a1.35 1.35 0 1 1 2.6 0" fill="none" stroke="#5f6368" stroke-width="1.1"/><path d="M0.3 7.7V6.6a1.6 1.6 0 0 1 1.2-1.4 10 10 0 0 1 5 0 1.6 1.6 0 0 1 1.2 1.4v1.1Z" fill="#5f6368"/></svg>
<div class="t" style="left:710.5px;top:369.10px;font-size:15px;color:#5f6368">Name</div>
<div class="chip" style="left:822px;top:366.8px;width:75.5px"></div>
<svg style="left:829.2px;top:370.10px" width="62" height="12" viewBox="0 0 62 12"><path transform="translate(0.0,0) scale(0.46)" d="M12 2.5l2.9 6.6 7.1.6-5.4 4.7 1.6 7-6.2-3.7-6.2 3.7 1.6-7L2 9.7l7.1-.6z" fill="none" stroke="#3c4043" stroke-width="2.1" stroke-linejoin="miter"/><path transform="translate(12.5,0) scale(0.46)" d="M12 2.5l2.9 6.6 7.1.6-5.4 4.7 1.6 7-6.2-3.7-6.2 3.7 1.6-7L2 9.7l7.1-.6z" fill="none" stroke="#3c4043" stroke-width="2.1" stroke-linejoin="miter"/><path transform="translate(25.0,0) scale(0.46)" d="M12 2.5l2.9 6.6 7.1.6-5.4 4.7 1.6 7-6.2-3.7-6.2 3.7 1.6-7L2 9.7l7.1-.6z" fill="none" stroke="#3c4043" stroke-width="2.1" stroke-linejoin="miter"/><path transform="translate(37.5,0) scale(0.46)" d="M12 2.5l2.9 6.6 7.1.6-5.4 4.7 1.6 7-6.2-3.7-6.2 3.7 1.6-7L2 9.7l7.1-.6z" fill="none" stroke="#3c4043" stroke-width="2.1" stroke-linejoin="miter"/><path transform="translate(50.0,0) scale(0.46)" d="M12 2.5l2.9 6.6 7.1.6-5.4 4.7 1.6 7-6.2-3.7-6.2 3.7 1.6-7L2 9.7l7.1-.6z" fill="none" stroke="#3c4043" stroke-width="2.1" stroke-linejoin="miter"/></svg>
<div class="cell" style="left:981px;top:368.10px;width:125.6px;height:17px;color:#3c4043;line-height:17px">Performance metrics</div>
<div class="t" style="left:1117px;top:369.10px;font-size:15px;letter-spacing:0.2px;color:#3c4043">9 months minimum</div>
<div class="t" style="left:1324px;top:369.10px;font-size:15px;font-style:italic;color:#5f6368">Case studies</div>
<div class="a" style="left:0;top:392.4px;width:41px;height:34.0px;background:#d3e3fd"></div>
<div class="a" style="left:0;top:425.40px;width:41px;height:1px;background:#c0c6ce"></div>
<div class="t" style="left:12.1px;top:402.60px;font-size:12px;font-weight:bold;color:#0b1f3f">6</div>
<div class="a" style="left:43px;top:392.4px;width:1810px;height:34.0px;background:#fff"></div>
<div class="a" style="left:200px;top:392.4px;width:181px;height:34.0px;background:#e7effc"></div>
<div class="chip" style="left:51px;top:400.8px;width:70px"></div>
<svg style="left:59px;top:405.7px" width="8" height="8" viewBox="0 0 8 8"><path d="M2.7 2.8a1.35 1.35 0 1 1 2.6 0" fill="none" stroke="#5f6368" stroke-width="1.1"/><path d="M0.3 7.7V6.6a1.6 1.6 0 0 1 1.2-1.4 10 10 0 0 1 5 0 1.6 1.6 0 0 1 1.2 1.4v1.1Z" fill="#5f6368"/></svg>
<div class="t" style="left:75.5px;top:403.10px;font-size:15px;color:#5f6368">Name</div>
<div class="chip" style="left:211px;top:400.8px;width:160px;background:#d3ddec"></div>
<div class="tri" style="left:353.7px;top:407.10px;border-width:5.1px 5.2px 0 5.2px;border-top-color:#3c4043"></div>
<div class="t" style="left:391px;top:403.10px;font-size:15px;font-style:italic;color:#5f6368">Service(s) offered</div>
<div class="chip" style="left:550px;top:400.8px;width:54px"></div>
<svg style="left:558px;top:404.4px" width="9" height="11" viewBox="0 0 9 11"><path d="M0.7 0.7H5.6L8.3 3.4V10.3H0.7Z" fill="none" stroke="#5f6368" stroke-width="1.2" stroke-linejoin="round"/></svg>
<div class="t" style="left:574px;top:403.10px;font-size:15px;color:#5f6368">File</div>
<div class="chip" style="left:686px;top:400.8px;width:70.5px"></div>
<svg style="left:694px;top:405.7px" width="8" height="8" viewBox="0 0 8 8"><path d="M2.7 2.8a1.35 1.35 0 1 1 2.6 0" fill="none" stroke="#5f6368" stroke-width="1.1"/><path d="M0.3 7.7V6.6a1.6 1.6 0 0 1 1.2-1.4 10 10 0 0 1 5 0 1.6 1.6 0 0 1 1.2 1.4v1.1Z" fill="#5f6368"/></svg>
<div class="t" style="left:710.5px;top:403.10px;font-size:15px;color:#5f6368">Name</div>
<div class="chip" style="left:822px;top:400.8px;width:75.5px"></div>
<svg style="left:829.2px;top:404.10px" width="62" height="12" viewBox="0 0 62 12"><path transform="translate(0.0,0) scale(0.46)" d="M12 2.5l2.9 6.6 7.1.6-5.4 4.7 1.6 7-6.2-3.7-6.2 3.7 1.6-7L2 9.7l7.1-.6z" fill="none" stroke="#3c4043" stroke-width="2.1" stroke-linejoin="miter"/><path transform="translate(12.5,0) scale(0.46)" d="M12 2.5l2.9 6.6 7.1.6-5.4 4.7 1.6 7-6.2-3.7-6.2 3.7 1.6-7L2 9.7l7.1-.6z" fill="none" stroke="#3c4043" stroke-width="2.1" stroke-linejoin="miter"/><path transform="translate(25.0,0) scale(0.46)" d="M12 2.5l2.9 6.6 7.1.6-5.4 4.7 1.6 7-6.2-3.7-6.2 3.7 1.6-7L2 9.7l7.1-.6z" fill="none" stroke="#3c4043" stroke-width="2.1" stroke-linejoin="miter"/><path transform="translate(37.5,0) scale(0.46)" d="M12 2.5l2.9 6.6 7.1.6-5.4 4.7 1.6 7-6.2-3.7-6.2 3.7 1.6-7L2 9.7l7.1-.6z" fill="none" stroke="#3c4043" stroke-width="2.1" stroke-linejoin="miter"/><path transform="translate(50.0,0) scale(0.46)" d="M12 2.5l2.9 6.6 7.1.6-5.4 4.7 1.6 7-6.2-3.7-6.2 3.7 1.6-7L2 9.7l7.1-.6z" fill="none" stroke="#3c4043" stroke-width="2.1" stroke-linejoin="miter"/></svg>
<div class="cell" style="left:981px;top:402.10px;width:125.6px;height:17px;color:#3c4043;line-height:17px">Performance metrics</div>
<div class="t" style="left:1117px;top:403.10px;font-size:15px;letter-spacing:0.2px;color:#3c4043">10 months minimum</div>
<div class="t" style="left:1324px;top:403.10px;font-size:15px;font-style:italic;color:#5f6368">Case studies</div>
<div class="a" style="left:0;top:426.4px;width:41px;height:34.0px;background:#d3e3fd"></div>
<div class="a" style="left:0;top:459.40px;width:41px;height:1px;background:#c0c6ce"></div>
<div class="t" style="left:12.1px;top:436.60px;font-size:12px;font-weight:bold;color:#0b1f3f">7</div>
<div class="a" style="left:43px;top:426.4px;width:1810px;height:34.0px;background:#f8f9fa"></div>
<div class="a" style="left:200px;top:426.4px;width:181px;height:34.0px;background:#e0e9f7"></div>
<div class="chip" style="left:51px;top:434.8px;width:70px"></div>
<svg style="left:59px;top:439.7px" width="8" height="8" viewBox="0 0 8 8"><path d="M2.7 2.8a1.35 1.35 0 1 1 2.6 0" fill="none" stroke="#5f6368" stroke-width="1.1"/><path d="M0.3 7.7V6.6a1.6 1.6 0 0 1 1.2-1.4 10 10 0 0 1 5 0 1.6 1.6 0 0 1 1.2 1.4v1.1Z" fill="#5f6368"/></svg>
<div class="t" style="left:75.5px;top:437.10px;font-size:15px;color:#5f6368">Name</div>
<div class="chip" style="left:211px;top:434.8px;width:160px;background:#d3ddec"></div>
<div class="tri" style="left:353.7px;top:441.10px;border-width:5.1px 5.2px 0 5.2px;border-top-color:#3c4043"></div>
<div class="t" style="left:391px;top:437.10px;font-size:15px;font-style:italic;color:#5f6368">Service(s) offered</div>
<div class="chip" style="left:550px;top:434.8px;width:54px"></div>
<svg style="left:558px;top:438.4px" width="9" height="11" viewBox="0 0 9 11"><path d="M0.7 0.7H5.6L8.3 3.4V10.3H0.7Z" fill="none" stroke="#5f6368" stroke-width="1.2" stroke-linejoin="round"/></svg>
<div class="t" style="left:574px;top:437.10px;font-size:15px;color:#5f6368">File</div>
<div class="chip" style="left:686px;top:434.8px;width:70.5px"></div>
<svg style="left:694px;top:439.7px" width="8" height="8" viewBox="0 0 8 8"><path d="M2.7 2.8a1.35 1.35 0 1 1 2.6 0" fill="none" stroke="#5f6368" stroke-width="1.1"/><path d="M0.3 7.7V6.6a1.6 1.6 0 0 1 1.2-1.4 10 10 0 0 1 5 0 1.6 1.6 0 0 1 1.2 1.4v1.1Z" fill="#5f6368"/></svg>
<div class="t" style="left:710.5px;top:437.10px;font-size:15px;color:#5f6368">Name</div>
<div class="chip" style="left:822px;top:434.8px;width:75.5px"></div>
<svg style="left:829.2px;top:438.10px" width="62" height="12" viewBox="0 0 62 12"><path transform="translate(0.0,0) scale(0.46)" d="M12 2.5l2.9 6.6 7.1.6-5.4 4.7 1.6 7-6.2-3.7-6.2 3.7 1.6-7L2 9.7l7.1-.6z" fill="none" stroke="#3c4043" stroke-width="2.1" stroke-linejoin="miter"/><path transform="translate(12.5,0) scale(0.46)" d="M12 2.5l2.9 6.6 7.1.6-5.4 4.7 1.6 7-6.2-3.7-6.2 3.7 1.6-7L2 9.7l7.1-.6z" fill="none" stroke="#3c4043" stroke-width="2.1" stroke-linejoin="miter"/><path transform="translate(25.0,0) scale(0.46)" d="M12 2.5l2.9 6.6 7.1.6-5.4 4.7 1.6 7-6.2-3.7-6.2 3.7 1.6-7L2 9.7l7.1-.6z" fill="none" stroke="#3c4043" stroke-width="2.1" stroke-linejoin="miter"/><path transform="translate(37.5,0) scale(0.46)" d="M12 2.5l2.9 6.6 7.1.6-5.4 4.7 1.6 7-6.2-3.7-6.2 3.7 1.6-7L2 9.7l7.1-.6z" fill="none" stroke="#3c4043" stroke-width="2.1" stroke-linejoin="miter"/><path transform="translate(50.0,0) scale(0.46)" d="M12 2.5l2.9 6.6 7.1.6-5.4 4.7 1.6 7-6.2-3.7-6.2 3.7 1.6-7L2 9.7l7.1-.6z" fill="none" stroke="#3c4043" stroke-width="2.1" stroke-linejoin="miter"/></svg>
<div class="cell" style="left:981px;top:436.10px;width:125.6px;height:17px;color:#3c4043;line-height:17px">Performance metrics</div>
<div class="t" style="left:1117px;top:437.10px;font-size:15px;letter-spacing:0.2px;color:#3c4043">11 months minimum</div>
<div class="t" style="left:1324px;top:437.10px;font-size:15px;font-style:italic;color:#5f6368">Case studies</div>
<div class="a" style="left:0;top:460.4px;width:41px;height:34.0px;background:#d3e3fd"></div>
<div class="a" style="left:0;top:493.40px;width:41px;height:1px;background:#c0c6ce"></div>
<div class="t" style="left:12.1px;top:470.60px;font-size:12px;font-weight:bold;color:#0b1f3f">8</div>
<div class="a" style="left:43px;top:460.4px;width:1810px;height:34.0px;background:#fff"></div>
<div class="a" style="left:200px;top:460.4px;width:181px;height:34.0px;background:#e7effc"></div>
<div class="chip" style="left:51px;top:468.8px;width:70px"></div>
<svg style="left:59px;top:473.7px" width="8" height="8" viewBox="0 0 8 8"><path d="M2.7 2.8a1.35 1.35 0 1 1 2.6 0" fill="none" stroke="#5f6368" stroke-width="1.1"/><path d="M0.3 7.7V6.6a1.6 1.6 0 0 1 1.2-1.4 10 10 0 0 1 5 0 1.6 1.6 0 0 1 1.2 1.4v1.1Z" fill="#5f6368"/></svg>
<div class="t" style="left:75.5px;top:471.10px;font-size:15px;color:#5f6368">Name</div>
<div class="chip" style="left:211px;top:468.8px;width:160px;background:#d3ddec"></div>
<div class="tri" style="left:353.7px;top:475.10px;border-width:5.1px 5.2px 0 5.2px;border-top-color:#3c4043"></div>
<div class="t" style="left:391px;top:471.10px;font-size:15px;font-style:italic;color:#5f6368">Service(s) offered</div>
<div class="chip" style="left:550px;top:468.8px;width:54px"></div>
<svg style="left:558px;top:472.4px" width="9" height="11" viewBox="0 0 9 11"><path d="M0.7 0.7H5.6L8.3 3.4V10.3H0.7Z" fill="none" stroke="#5f6368" stroke-width="1.2" stroke-linejoin="round"/></svg>
<div class="t" style="left:574px;top:471.10px;font-size:15px;color:#5f6368">File</div>
<div class="chip" style="left:686px;top:468.8px;width:70.5px"></div>
<svg style="left:694px;top:473.7px" width="8" height="8" viewBox="0 0 8 8"><path d="M2.7 2.8a1.35 1.35 0 1 1 2.6 0" fill="none" stroke="#5f6368" stroke-width="1.1"/><path d="M0.3 7.7V6.6a1.6 1.6 0 0 1 1.2-1.4 10 10 0 0 1 5 0 1.6 1.6 0 0 1 1.2 1.4v1.1Z" fill="#5f6368"/></svg>
<div class="t" style="left:710.5px;top:471.10px;font-size:15px;color:#5f6368">Name</div>
<div class="chip" style="left:822px;top:468.8px;width:75.5px"></div>
<svg style="left:829.2px;top:472.10px" width="62" height="12" viewBox="0 0 62 12"><path transform="translate(0.0,0) scale(0.46)" d="M12 2.5l2.9 6.6 7.1.6-5.4 4.7 1.6 7-6.2-3.7-6.2 3.7 1.6-7L2 9.7l7.1-.6z" fill="none" stroke="#3c4043" stroke-width="2.1" stroke-linejoin="miter"/><path transform="translate(12.5,0) scale(0.46)" d="M12 2.5l2.9 6.6 7.1.6-5.4 4.7 1.6 7-6.2-3.7-6.2 3.7 1.6-7L2 9.7l7.1-.6z" fill="none" stroke="#3c4043" stroke-width="2.1" stroke-linejoin="miter"/><path transform="translate(25.0,0) scale(0.46)" d="M12 2.5l2.9 6.6 7.1.6-5.4 4.7 1.6 7-6.2-3.7-6.2 3.7 1.6-7L2 9.7l7.1-.6z" fill="none" stroke="#3c4043" stroke-width="2.1" stroke-linejoin="miter"/><path transform="translate(37.5,0) scale(0.46)" d="M12 2.5l2.9 6.6 7.1.6-5.4 4.7 1.6 7-6.2-3.7-6.2 3.7 1.6-7L2 9.7l7.1-.6z" fill="none" stroke="#3c4043" stroke-width="2.1" stroke-linejoin="miter"/><path transform="translate(50.0,0) scale(0.46)" d="M12 2.5l2.9 6.6 7.1.6-5.4 4.7 1.6 7-6.2-3.7-6.2 3.7 1.6-7L2 9.7l7.1-.6z" fill="none" stroke="#3c4043" stroke-width="2.1" stroke-linejoin="miter"/></svg>
<div class="cell" style="left:981px;top:470.10px;width:125.6px;height:17px;color:#3c4043;line-height:17px">Performance metrics</div>
<div class="t" style="left:1117px;top:471.10px;font-size:15px;letter-spacing:0.2px;color:#3c4043">12 months minimum</div>
<div class="t" style="left:1324px;top:471.10px;font-size:15px;font-style:italic;color:#5f6368">Case studies</div>
<div class="a" style="left:0;top:494.4px;width:41px;height:34.0px;background:#d3e3fd"></div>
<div class="a" style="left:0;top:527.40px;width:41px;height:1px;background:#c0c6ce"></div>
<div class="t" style="left:12.1px;top:504.60px;font-size:12px;font-weight:bold;color:#0b1f3f">9</div>
<div class="a" style="left:43px;top:494.4px;width:1810px;height:34.0px;background:#f8f9fa"></div>
<div class="a" style="left:200px;top:494.4px;width:181px;height:34.0px;background:#e0e9f7"></div>
<div class="chip" style="left:51px;top:502.8px;width:70px"></div>
<svg style="left:59px;top:507.7px" width="8" height="8" viewBox="0 0 8 8"><path d="M2.7 2.8a1.35 1.35 0 1 1 2.6 0" fill="none" stroke="#5f6368" stroke-width="1.1"/><path d="M0.3 7.7V6.6a1.6 1.6 0 0 1 1.2-1.4 10 10 0 0 1 5 0 1.6 1.6 0 0 1 1.2 1.4v1.1Z" fill="#5f6368"/></svg>
<div class="t" style="left:75.5px;top:505.10px;font-size:15px;color:#5f6368">Name</div>
<div class="chip" style="left:211px;top:502.8px;width:160px;background:#d3ddec"></div>
<div class="tri" style="left:353.7px;top:509.10px;border-width:5.1px 5.2px 0 5.2px;border-top-color:#3c4043"></div>
<div class="t" style="left:391px;top:505.10px;font-size:15px;font-style:italic;color:#5f6368">Service(s) offered</div>
<div class="chip" style="left:550px;top:502.8px;width:54px"></div>
<svg style="left:558px;top:506.4px" width="9" height="11" viewBox="0 0 9 11"><path d="M0.7 0.7H5.6L8.3 3.4V10.3H0.7Z" fill="none" stroke="#5f6368" stroke-width="1.2" stroke-linejoin="round"/></svg>
<div class="t" style="left:574px;top:505.10px;font-size:15px;color:#5f6368">File</div>
<div class="chip" style="left:686px;top:502.8px;width:70.5px"></div>
<svg style="left:694px;top:507.7px" width="8" height="8" viewBox="0 0 8 8"><path d="M2.7 2.8a1.35 1.35 0 1 1 2.6 0" fill="none" stroke="#5f6368" stroke-width="1.1"/><path d="M0.3 7.7V6.6a1.6 1.6 0 0 1 1.2-1.4 10 10 0 0 1 5 0 1.6 1.6 0 0 1 1.2 1.4v1.1Z" fill="#5f6368"/></svg>
<div class="t" style="left:710.5px;top:505.10px;font-size:15px;color:#5f6368">Name</div>
<div class="chip" style="left:822px;top:502.8px;width:75.5px"></div>
<svg style="left:829.2px;top:506.10px" width="62" height="12" viewBox="0 0 62 12"><path transform="translate(0.0,0) scale(0.46)" d="M12 2.5l2.9 6.6 7.1.6-5.4 4.7 1.6 7-6.2-3.7-6.2 3.7 1.6-7L2 9.7l7.1-.6z" fill="none" stroke="#3c4043" stroke-width="2.1" stroke-linejoin="miter"/><path transform="translate(12.5,0) scale(0.46)" d="M12 2.5l2.9 6.6 7.1.6-5.4 4.7 1.6 7-6.2-3.7-6.2 3.7 1.6-7L2 9.7l7.1-.6z" fill="none" stroke="#3c4043" stroke-width="2.1" stroke-linejoin="miter"/><path transform="translate(25.0,0) scale(0.46)" d="M12 2.5l2.9 6.6 7.1.6-5.4 4.7 1.6 7-6.2-3.7-6.2 3.7 1.6-7L2 9.7l7.1-.6z" fill="none" stroke="#3c4043" stroke-width="2.1" stroke-linejoin="miter"/><path transform="translate(37.5,0) scale(0.46)" d="M12 2.5l2.9 6.6 7.1.6-5.4 4.7 1.6 7-6.2-3.7-6.2 3.7 1.6-7L2 9.7l7.1-.6z" fill="none" stroke="#3c4043" stroke-width="2.1" stroke-linejoin="miter"/><path transform="translate(50.0,0) scale(0.46)" d="M12 2.5l2.9 6.6 7.1.6-5.4 4.7 1.6 7-6.2-3.7-6.2 3.7 1.6-7L2 9.7l7.1-.6z" fill="none" stroke="#3c4043" stroke-width="2.1" stroke-linejoin="miter"/></svg>
<div class="cell" style="left:981px;top:504.10px;width:125.6px;height:17px;color:#3c4043;line-height:17px">Performance metrics</div>
<div class="t" style="left:1324px;top:505.10px;font-size:15px;font-style:italic;color:#5f6368">Case studies</div>
<div class="a" style="left:0;top:528.4px;width:41px;height:34.0px;background:#d3e3fd"></div>
<div class="a" style="left:0;top:561.40px;width:41px;height:1px;background:#c0c6ce"></div>
<div class="t" style="left:8.7px;top:538.60px;font-size:12px;font-weight:bold;color:#0b1f3f">10</div>
<div class="a" style="left:43px;top:528.4px;width:1810px;height:34.0px;background:#fff"></div>
<div class="a" style="left:200px;top:528.4px;width:181px;height:34.0px;background:#e7effc"></div>
<div class="chip" style="left:51px;top:536.8px;width:70px"></div>
<svg style="left:59px;top:541.6999999999999px" width="8" height="8" viewBox="0 0 8 8"><path d="M2.7 2.8a1.35 1.35 0 1 1 2.6 0" fill="none" stroke="#5f6368" stroke-width="1.1"/><path d="M0.3 7.7V6.6a1.6 1.6 0 0 1 1.2-1.4 10 10 0 0 1 5 0 1.6 1.6 0 0 1 1.2 1.4v1.1Z" fill="#5f6368"/></svg>
<div class="t" style="left:75.5px;top:539.10px;font-size:15px;color:#5f6368">Name</div>
<div class="chip" style="left:211px;top:536.8px;width:160px;background:#d3ddec"></div>
<div class="tri" style="left:353.7px;top:543.10px;border-width:5.1px 5.2px 0 5.2px;border-top-color:#3c4043"></div>
<div class="t" style="left:391px;top:539.10px;font-size:15px;font-style:italic;color:#5f6368">Service(s) offered</div>
<div class="chip" style="left:550px;top:536.8px;width:54px"></div>
<svg style="left:558px;top:540.4px" width="9" height="11" viewBox="0 0 9 11"><path d="M0.7 0.7H5.6L8.3 3.4V10.3H0.7Z" fill="none" stroke="#5f6368" stroke-width="1.2" stroke-linejoin="round"/></svg>
<div class="t" style="left:574px;top:539.10px;font-size:15px;color:#5f6368">File</div>
<div class="chip" style="left:686px;top:536.8px;width:70.5px"></div>
<svg style="left:694px;top:541.6999999999999px" width="8" height="8" viewBox="0 0 8 8"><path d="M2.7 2.8a1.35 1.35 0 1 1 2.6 0" fill="none" stroke="#5f6368" stroke-width="1.1"/><path d="M0.3 7.7V6.6a1.6 1.6 0 0 1 1.2-1.4 10 10 0 0 1 5 0 1.6 1.6 0 0 1 1.2 1.4v1.1Z" fill="#5f6368"/></svg>
<div class="t" style="left:710.5px;top:539.10px;font-size:15px;color:#5f6368">Name</div>
<div class="chip" style="left:822px;top:536.8px;width:75.5px"></div>
<svg style="left:829.2px;top:540.10px" width="62" height="12" viewBox="0 0 62 12"><path transform="translate(0.0,0) scale(0.46)" d="M12 2.5l2.9 6.6 7.1.6-5.4 4.7 1.6 7-6.2-3.7-6.2 3.7 1.6-7L2 9.7l7.1-.6z" fill="none" stroke="#3c4043" stroke-width="2.1" stroke-linejoin="miter"/><path transform="translate(12.5,0) scale(0.46)" d="M12 2.5l2.9 6.6 7.1.6-5.4 4.7 1.6 7-6.2-3.7-6.2 3.7 1.6-7L2 9.7l7.1-.6z" fill="none" stroke="#3c4043" stroke-width="2.1" stroke-linejoin="miter"/><path transform="translate(25.0,0) scale(0.46)" d="M12 2.5l2.9 6.6 7.1.6-5.4 4.7 1.6 7-6.2-3.7-6.2 3.7 1.6-7L2 9.7l7.1-.6z" fill="none" stroke="#3c4043" stroke-width="2.1" stroke-linejoin="miter"/><path transform="translate(37.5,0) scale(0.46)" d="M12 2.5l2.9 6.6 7.1.6-5.4 4.7 1.6 7-6.2-3.7-6.2 3.7 1.6-7L2 9.7l7.1-.6z" fill="none" stroke="#3c4043" stroke-width="2.1" stroke-linejoin="miter"/><path transform="translate(50.0,0) scale(0.46)" d="M12 2.5l2.9 6.6 7.1.6-5.4 4.7 1.6 7-6.2-3.7-6.2 3.7 1.6-7L2 9.7l7.1-.6z" fill="none" stroke="#3c4043" stroke-width="2.1" stroke-linejoin="miter"/></svg>
<div class="cell" style="left:981px;top:538.10px;width:125.6px;height:17px;color:#3c4043;line-height:17px">Performance metrics</div>
<div class="t" style="left:1324px;top:539.10px;font-size:15px;font-style:italic;color:#5f6368">Case studies</div>
<div class="a" style="left:0;top:562.4px;width:41px;height:34.0px;background:#d3e3fd"></div>
<div class="a" style="left:0;top:595.40px;width:41px;height:1px;background:#c0c6ce"></div>
<div class="t" style="left:8.7px;top:572.60px;font-size:12px;font-weight:bold;color:#0b1f3f">11</div>
<div class="a" style="left:43px;top:562.4px;width:1810px;height:34.0px;background:#f8f9fa"></div>
<div class="a" style="left:200px;top:562.4px;width:181px;height:34.0px;background:#e0e9f7"></div>
<div class="chip" style="left:51px;top:570.8px;width:70px"></div>
<svg style="left:59px;top:575.6999999999999px" width="8" height="8" viewBox="0 0 8 8"><path d="M2.7 2.8a1.35 1.35 0 1 1 2.6 0" fill="none" stroke="#5f6368" stroke-width="1.1"/><path d="M0.3 7.7V6.6a1.6 1.6 0 0 1 1.2-1.4 10 10 0 0 1 5 0 1.6 1.6 0 0 1 1.2 1.4v1.1Z" fill="#5f6368"/></svg>
<div class="t" style="left:75.5px;top:573.10px;font-size:15px;color:#5f6368">Name</div>
<div class="chip" style="left:211px;top:570.8px;width:160px;background:#d3ddec"></div>
<div class="tri" style="left:353.7px;top:577.10px;border-width:5.1px 5.2px 0 5.2px;border-top-color:#3c4043"></div>
<div class="t" style="left:391px;top:573.10px;font-size:15px;font-style:italic;color:#5f6368">Service(s) offered</div>
<div class="chip" style="left:550px;top:570.8px;width:54px"></div>
<svg style="left:558px;top:574.4px" width="9" height="11" viewBox="0 0 9 11"><path d="M0.7 0.7H5.6L8.3 3.4V10.3H0.7Z" fill="none" stroke="#5f6368" stroke-width="1.2" stroke-linejoin="round"/></svg>
<div class="t" style="left:574px;top:573.10px;font-size:15px;color:#5f6368">File</div>
<div class="chip" style="left:686px;top:570.8px;width:70.5px"></div>
<svg style="left:694px;top:575.6999999999999px" width="8" height="8" viewBox="0 0 8 8"><path d="M2.7 2.8a1.35 1.35 0 1 1 2.6 0" fill="none" stroke="#5f6368" stroke-width="1.1"/><path d="M0.3 7.7V6.6a1.6 1.6 0 0 1 1.2-1.4 10 10 0 0 1 5 0 1.6 1.6 0 0 1 1.2 1.4v1.1Z" fill="#5f6368"/></svg>
<div class="t" style="left:710.5px;top:573.10px;font-size:15px;color:#5f6368">Name</div>
<div class="chip" style="left:822px;top:570.8px;width:75.5px"></div>
<svg style="left:829.2px;top:574.10px" width="62" height="12" viewBox="0 0 62 12"><path transform="translate(0.0,0) scale(0.46)" d="M12 2.5l2.9 6.6 7.1.6-5.4 4.7 1.6 7-6.2-3.7-6.2 3.7 1.6-7L2 9.7l7.1-.6z" fill="none" stroke="#3c4043" stroke-width="2.1" stroke-linejoin="miter"/><path transform="translate(12.5,0) scale(0.46)" d="M12 2.5l2.9 6.6 7.1.6-5.4 4.7 1.6 7-6.2-3.7-6.2 3.7 1.6-7L2 9.7l7.1-.6z" fill="none" stroke="#3c4043" stroke-width="2.1" stroke-linejoin="miter"/><path transform="translate(25.0,0) scale(0.46)" d="M12 2.5l2.9 6.6 7.1.6-5.4 4.7 1.6 7-6.2-3.7-6.2 3.7 1.6-7L2 9.7l7.1-.6z" fill="none" stroke="#3c4043" stroke-width="2.1" stroke-linejoin="miter"/><path transform="translate(37.5,0) scale(0.46)" d="M12 2.5l2.9 6.6 7.1.6-5.4 4.7 1.6 7-6.2-3.7-6.2 3.7 1.6-7L2 9.7l7.1-.6z" fill="none" stroke="#3c4043" stroke-width="2.1" stroke-linejoin="miter"/><path transform="translate(50.0,0) scale(0.46)" d="M12 2.5l2.9 6.6 7.1.6-5.4 4.7 1.6 7-6.2-3.7-6.2 3.7 1.6-7L2 9.7l7.1-.6z" fill="none" stroke="#3c4043" stroke-width="2.1" stroke-linejoin="miter"/></svg>
<div class="cell" style="left:981px;top:572.10px;width:125.6px;height:17px;color:#3c4043;line-height:17px">Performance metrics</div>
<div class="t" style="left:1324px;top:573.10px;font-size:15px;font-style:italic;color:#5f6368">Case studies</div>
<div class="a" style="left:0;top:596.4px;width:41px;height:34.0px;background:#d3e3fd"></div>
<div class="a" style="left:0;top:629.40px;width:41px;height:1px;background:#c0c6ce"></div>
<div class="t" style="left:8.7px;top:606.60px;font-size:12px;font-weight:bold;color:#0b1f3f">12</div>
<div class="a" style="left:43px;top:596.4px;width:1810px;height:34.0px;background:#fff"></div>
<div class="a" style="left:200px;top:596.4px;width:181px;height:34.0px;background:#e7effc"></div>
<div class="chip" style="left:51px;top:604.8px;width:70px"></div>
<svg style="left:59px;top:609.6999999999999px" width="8" height="8" viewBox="0 0 8 8"><path d="M2.7 2.8a1.35 1.35 0 1 1 2.6 0" fill="none" stroke="#5f6368" stroke-width="1.1"/><path d="M0.3 7.7V6.6a1.6 1.6 0 0 1 1.2-1.4 10 10 0 0 1 5 0 1.6 1.6 0 0 1 1.2 1.4v1.1Z" fill="#5f6368"/></svg>
<div class="t" style="left:75.5px;top:607.10px;font-size:15px;color:#5f6368">Name</div>
<div class="chip" style="left:211px;top:604.8px;width:160px;background:#d3ddec"></div>
<div class="tri" style="left:353.7px;top:611.10px;border-width:5.1px 5.2px 0 5.2px;border-top-color:#3c4043"></div>
<div class="t" style="left:391px;top:607.10px;font-size:15px;font-style:italic;color:#5f6368">Service(s) offered</div>
<div class="chip" style="left:550px;top:604.8px;width:54px"></div>
<svg style="left:558px;top:608.4px" width="9" height="11" viewBox="0 0 9 11"><path d="M0.7 0.7H5.6L8.3 3.4V10.3H0.7Z" fill="none" stroke="#5f6368" stroke-width="1.2" stroke-linejoin="round"/></svg>
<div class="t" style="left:574px;top:607.10px;font-size:15px;color:#5f6368">File</div>
<div class="chip" style="left:686px;top:604.8px;width:70.5px"></div>
<svg style="left:694px;top:609.6999999999999px" width="8" height="8" viewBox="0 0 8 8"><path d="M2.7 2.8a1.35 1.35 0 1 1 2.6 0" fill="none" stroke="#5f6368" stroke-width="1.1"/><path d="M0.3 7.7V6.6a1.6 1.6 0 0 1 1.2-1.4 10 10 0 0 1 5 0 1.6 1.6 0 0 1 1.2 1.4v1.1Z" fill="#5f6368"/></svg>
<div class="t" style="left:710.5px;top:607.10px;font-size:15px;color:#5f6368">Name</div>
<div class="chip" style="left:822px;top:604.8px;width:75.5px"></div>
<svg style="left:829.2px;top:608.10px" width="62" height="12" viewBox="0 0 62 12"><path transform="translate(0.0,0) scale(0.46)" d="M12 2.5l2.9 6.6 7.1.6-5.4 4.7 1.6 7-6.2-3.7-6.2 3.7 1.6-7L2 9.7l7.1-.6z" fill="none" stroke="#3c4043" stroke-width="2.1" stroke-linejoin="miter"/><path transform="translate(12.5,0) scale(0.46)" d="M12 2.5l2.9 6.6 7.1.6-5.4 4.7 1.6 7-6.2-3.7-6.2 3.7 1.6-7L2 9.7l7.1-.6z" fill="none" stroke="#3c4043" stroke-width="2.1" stroke-linejoin="miter"/><path transform="translate(25.0,0) scale(0.46)" d="M12 2.5l2.9 6.6 7.1.6-5.4 4.7 1.6 7-6.2-3.7-6.2 3.7 1.6-7L2 9.7l7.1-.6z" fill="none" stroke="#3c4043" stroke-width="2.1" stroke-linejoin="miter"/><path transform="translate(37.5,0) scale(0.46)" d="M12 2.5l2.9 6.6 7.1.6-5.4 4.7 1.6 7-6.2-3.7-6.2 3.7 1.6-7L2 9.7l7.1-.6z" fill="none" stroke="#3c4043" stroke-width="2.1" stroke-linejoin="miter"/><path transform="translate(50.0,0) scale(0.46)" d="M12 2.5l2.9 6.6 7.1.6-5.4 4.7 1.6 7-6.2-3.7-6.2 3.7 1.6-7L2 9.7l7.1-.6z" fill="none" stroke="#3c4043" stroke-width="2.1" stroke-linejoin="miter"/></svg>
<div class="cell" style="left:981px;top:606.10px;width:125.6px;height:17px;color:#3c4043;line-height:17px">Performance metrics</div>
<div class="t" style="left:1324px;top:607.10px;font-size:15px;font-style:italic;color:#5f6368">Case studies</div>
<div class="a" style="left:0;top:630.4px;width:41px;height:34.0px;background:#d3e3fd"></div>
<div class="a" style="left:0;top:663.40px;width:41px;height:1px;background:#c0c6ce"></div>
<div class="t" style="left:8.7px;top:640.60px;font-size:12px;font-weight:bold;color:#0b1f3f">13</div>
<div class="a" style="left:43px;top:630.4px;width:1810px;height:34.0px;background:#f8f9fa"></div>
<div class="a" style="left:200px;top:630.4px;width:181px;height:34.0px;background:#e0e9f7"></div>
<div class="chip" style="left:51px;top:638.8px;width:70px"></div>
<svg style="left:59px;top:643.6999999999999px" width="8" height="8" viewBox="0 0 8 8"><path d="M2.7 2.8a1.35 1.35 0 1 1 2.6 0" fill="none" stroke="#5f6368" stroke-width="1.1"/><path d="M0.3 7.7V6.6a1.6 1.6 0 0 1 1.2-1.4 10 10 0 0 1 5 0 1.6 1.6 0 0 1 1.2 1.4v1.1Z" fill="#5f6368"/></svg>
<div class="t" style="left:75.5px;top:641.10px;font-size:15px;color:#5f6368">Name</div>
<div class="chip" style="left:211px;top:638.8px;width:160px;background:#d3ddec"></div>
<div class="tri" style="left:353.7px;top:645.10px;border-width:5.1px 5.2px 0 5.2px;border-top-color:#3c4043"></div>
<div class="t" style="left:391px;top:641.10px;font-size:15px;font-style:italic;color:#5f6368">Service(s) offered</div>
<div class="chip" style="left:550px;top:638.8px;width:54px"></div>
<svg style="left:558px;top:642.4px" width="9" height="11" viewBox="0 0 9 11"><path d="M0.7 0.7H5.6L8.3 3.4V10.3H0.7Z" fill="none" stroke="#5f6368" stroke-width="1.2" stroke-linejoin="round"/></svg>
<div class="t" style="left:574px;top:641.10px;font-size:15px;color:#5f6368">File</div>
<div class="chip" style="left:686px;top:638.8px;width:70.5px"></div>
<svg style="left:694px;top:643.6999999999999px" width="8" height="8" viewBox="0 0 8 8"><path d="M2.7 2.8a1.35 1.35 0 1 1 2.6 0" fill="none" stroke="#5f6368" stroke-width="1.1"/><path d="M0.3 7.7V6.6a1.6 1.6 0 0 1 1.2-1.4 10 10 0 0 1 5 0 1.6 1.6 0 0 1 1.2 1.4v1.1Z" fill="#5f6368"/></svg>
<div class="t" style="left:710.5px;top:641.10px;font-size:15px;color:#5f6368">Name</div>
<div class="chip" style="left:822px;top:638.8px;width:75.5px"></div>
<svg style="left:829.2px;top:642.10px" width="62" height="12" viewBox="0 0 62 12"><path transform="translate(0.0,0) scale(0.46)" d="M12 2.5l2.9 6.6 7.1.6-5.4 4.7 1.6 7-6.2-3.7-6.2 3.7 1.6-7L2 9.7l7.1-.6z" fill="none" stroke="#3c4043" stroke-width="2.1" stroke-linejoin="miter"/><path transform="translate(12.5,0) scale(0.46)" d="M12 2.5l2.9 6.6 7.1.6-5.4 4.7 1.6 7-6.2-3.7-6.2 3.7 1.6-7L2 9.7l7.1-.6z" fill="none" stroke="#3c4043" stroke-width="2.1" stroke-linejoin="miter"/><path transform="translate(25.0,0) scale(0.46)" d="M12 2.5l2.9 6.6 7.1.6-5.4 4.7 1.6 7-6.2-3.7-6.2 3.7 1.6-7L2 9.7l7.1-.6z" fill="none" stroke="#3c4043" stroke-width="2.1" stroke-linejoin="miter"/><path transform="translate(37.5,0) scale(0.46)" d="M12 2.5l2.9 6.6 7.1.6-5.4 4.7 1.6 7-6.2-3.7-6.2 3.7 1.6-7L2 9.7l7.1-.6z" fill="none" stroke="#3c4043" stroke-width="2.1" stroke-linejoin="miter"/><path transform="translate(50.0,0) scale(0.46)" d="M12 2.5l2.9 6.6 7.1.6-5.4 4.7 1.6 7-6.2-3.7-6.2 3.7 1.6-7L2 9.7l7.1-.6z" fill="none" stroke="#3c4043" stroke-width="2.1" stroke-linejoin="miter"/></svg>
<div class="cell" style="left:981px;top:640.10px;width:125.6px;height:17px;color:#3c4043;line-height:17px">Performance metrics</div>
<div class="t" style="left:1324px;top:641.10px;font-size:15px;font-style:italic;color:#5f6368">Case studies</div>
<div class="a" style="left:0;top:664.4px;width:41px;height:34.0px;background:#d3e3fd"></div>
<div class="a" style="left:0;top:697.40px;width:41px;height:1px;background:#c0c6ce"></div>
<div class="t" style="left:8.7px;top:674.60px;font-size:12px;font-weight:bold;color:#0b1f3f">14</div>
<div class="a" style="left:43px;top:664.4px;width:1810px;height:34.0px;background:#fff"></div>
<div class="a" style="left:200px;top:664.4px;width:181px;height:34.0px;background:#e7effc"></div>
<div class="chip" style="left:51px;top:672.8px;width:70px"></div>
<svg style="left:59px;top:677.6999999999999px" width="8" height="8" viewBox="0 0 8 8"><path d="M2.7 2.8a1.35 1.35 0 1 1 2.6 0" fill="none" stroke="#5f6368" stroke-width="1.1"/><path d="M0.3 7.7V6.6a1.6 1.6 0 0 1 1.2-1.4 10 10 0 0 1 5 0 1.6 1.6 0 0 1 1.2 1.4v1.1Z" fill="#5f6368"/></svg>
<div class="t" style="left:75.5px;top:675.10px;font-size:15px;color:#5f6368">Name</div>
<div class="chip" style="left:211px;top:672.8px;width:160px;background:#d3ddec"></div>
<div class="tri" style="left:353.7px;top:679.10px;border-width:5.1px 5.2px 0 5.2px;border-top-color:#3c4043"></div>
<div class="t" style="left:391px;top:675.10px;font-size:15px;font-style:italic;color:#5f6368">Service(s) offered</div>
<div class="chip" style="left:550px;top:672.8px;width:54px"></div>
<svg style="left:558px;top:676.4px" width="9" height="11" viewBox="0 0 9 11"><path d="M0.7 0.7H5.6L8.3 3.4V10.3H0.7Z" fill="none" stroke="#5f6368" stroke-width="1.2" stroke-linejoin="round"/></svg>
<div class="t" style="left:574px;top:675.10px;font-size:15px;color:#5f6368">File</div>
<div class="chip" style="left:686px;top:672.8px;width:70.5px"></div>
<svg style="left:694px;top:677.6999999999999px" width="8" height="8" viewBox="0 0 8 8"><path d="M2.7 2.8a1.35 1.35 0 1 1 2.6 0" fill="none" stroke="#5f6368" stroke-width="1.1"/><path d="M0.3 7.7V6.6a1.6 1.6 0 0 1 1.2-1.4 10 10 0 0 1 5 0 1.6 1.6 0 0 1 1.2 1.4v1.1Z" fill="#5f6368"/></svg>
<div class="t" style="left:710.5px;top:675.10px;font-size:15px;color:#5f6368">Name</div>
<div class="chip" style="left:822px;top:672.8px;width:75.5px"></div>
<svg style="left:829.2px;top:676.10px" width="62" height="12" viewBox="0 0 62 12"><path transform="translate(0.0,0) scale(0.46)" d="M12 2.5l2.9 6.6 7.1.6-5.4 4.7 1.6 7-6.2-3.7-6.2 3.7 1.6-7L2 9.7l7.1-.6z" fill="none" stroke="#3c4043" stroke-width="2.1" stroke-linejoin="miter"/><path transform="translate(12.5,0) scale(0.46)" d="M12 2.5l2.9 6.6 7.1.6-5.4 4.7 1.6 7-6.2-3.7-6.2 3.7 1.6-7L2 9.7l7.1-.6z" fill="none" stroke="#3c4043" stroke-width="2.1" stroke-linejoin="miter"/><path transform="translate(25.0,0) scale(0.46)" d="M12 2.5l2.9 6.6 7.1.6-5.4 4.7 1.6 7-6.2-3.7-6.2 3.7 1.6-7L2 9.7l7.1-.6z" fill="none" stroke="#3c4043" stroke-width="2.1" stroke-linejoin="miter"/><path transform="translate(37.5,0) scale(0.46)" d="M12 2.5l2.9 6.6 7.1.6-5.4 4.7 1.6 7-6.2-3.7-6.2 3.7 1.6-7L2 9.7l7.1-.6z" fill="none" stroke="#3c4043" stroke-width="2.1" stroke-linejoin="miter"/><path transform="translate(50.0,0) scale(0.46)" d="M12 2.5l2.9 6.6 7.1.6-5.4 4.7 1.6 7-6.2-3.7-6.2 3.7 1.6-7L2 9.7l7.1-.6z" fill="none" stroke="#3c4043" stroke-width="2.1" stroke-linejoin="miter"/></svg>
<div class="cell" style="left:981px;top:674.10px;width:125.6px;height:17px;color:#3c4043;line-height:17px">Performance metrics</div>
<div class="t" style="left:1324px;top:675.10px;font-size:15px;font-style:italic;color:#5f6368">Case studies</div>
<div class="a" style="left:0;top:698.4px;width:41px;height:34.0px;background:#d3e3fd"></div>
<div class="a" style="left:0;top:731.40px;width:41px;height:1px;background:#c0c6ce"></div>
<div class="t" style="left:8.7px;top:708.60px;font-size:12px;font-weight:bold;color:#0b1f3f">15</div>
<div class="a" style="left:43px;top:698.4px;width:1810px;height:34.0px;background:#f8f9fa"></div>
<div class="a" style="left:200px;top:698.4px;width:181px;height:34.0px;background:#e0e9f7"></div>
<div class="chip" style="left:51px;top:706.8px;width:70px"></div>
<svg style="left:59px;top:711.6999999999999px" width="8" height="8" viewBox="0 0 8 8"><path d="M2.7 2.8a1.35 1.35 0 1 1 2.6 0" fill="none" stroke="#5f6368" stroke-width="1.1"/><path d="M0.3 7.7V6.6a1.6 1.6 0 0 1 1.2-1.4 10 10 0 0 1 5 0 1.6 1.6 0 0 1 1.2 1.4v1.1Z" fill="#5f6368"/></svg>
<div class="t" style="left:75.5px;top:709.10px;font-size:15px;color:#5f6368">Name</div>
<div class="chip" style="left:211px;top:706.8px;width:160px;background:#d3ddec"></div>
<div class="tri" style="left:353.7px;top:713.10px;border-width:5.1px 5.2px 0 5.2px;border-top-color:#3c4043"></div>
<div class="t" style="left:391px;top:709.10px;font-size:15px;font-style:italic;color:#5f6368">Service(s) offered</div>
<div class="chip" style="left:550px;top:706.8px;width:54px"></div>
<svg style="left:558px;top:710.4px" width="9" height="11" viewBox="0 0 9 11"><path d="M0.7 0.7H5.6L8.3 3.4V10.3H0.7Z" fill="none" stroke="#5f6368" stroke-width="1.2" stroke-linejoin="round"/></svg>
<div class="t" style="left:574px;top:709.10px;font-size:15px;color:#5f6368">File</div>
<div class="chip" style="left:686px;top:706.8px;width:70.5px"></div>
<svg style="left:694px;top:711.6999999999999px" width="8" height="8" viewBox="0 0 8 8"><path d="M2.7 2.8a1.35 1.35 0 1 1 2.6 0" fill="none" stroke="#5f6368" stroke-width="1.1"/><path d="M0.3 7.7V6.6a1.6 1.6 0 0 1 1.2-1.4 10 10 0 0 1 5 0 1.6 1.6 0 0 1 1.2 1.4v1.1Z" fill="#5f6368"/></svg>
<div class="t" style="left:710.5px;top:709.10px;font-size:15px;color:#5f6368">Name</div>
<div class="chip" style="left:822px;top:706.8px;width:75.5px"></div>
<svg style="left:829.2px;top:710.10px" width="62" height="12" viewBox="0 0 62 12"><path transform="translate(0.0,0) scale(0.46)" d="M12 2.5l2.9 6.6 7.1.6-5.4 4.7 1.6 7-6.2-3.7-6.2 3.7 1.6-7L2 9.7l7.1-.6z" fill="none" stroke="#3c4043" stroke-width="2.1" stroke-linejoin="miter"/><path transform="translate(12.5,0) scale(0.46)" d="M12 2.5l2.9 6.6 7.1.6-5.4 4.7 1.6 7-6.2-3.7-6.2 3.7 1.6-7L2 9.7l7.1-.6z" fill="none" stroke="#3c4043" stroke-width="2.1" stroke-linejoin="miter"/><path transform="translate(25.0,0) scale(0.46)" d="M12 2.5l2.9 6.6 7.1.6-5.4 4.7 1.6 7-6.2-3.7-6.2 3.7 1.6-7L2 9.7l7.1-.6z" fill="none" stroke="#3c4043" stroke-width="2.1" stroke-linejoin="miter"/><path transform="translate(37.5,0) scale(0.46)" d="M12 2.5l2.9 6.6 7.1.6-5.4 4.7 1.6 7-6.2-3.7-6.2 3.7 1.6-7L2 9.7l7.1-.6z" fill="none" stroke="#3c4043" stroke-width="2.1" stroke-linejoin="miter"/><path transform="translate(50.0,0) scale(0.46)" d="M12 2.5l2.9 6.6 7.1.6-5.4 4.7 1.6 7-6.2-3.7-6.2 3.7 1.6-7L2 9.7l7.1-.6z" fill="none" stroke="#3c4043" stroke-width="2.1" stroke-linejoin="miter"/></svg>
<div class="cell" style="left:981px;top:708.10px;width:125.6px;height:17px;color:#3c4043;line-height:17px">Performance metrics</div>
<div class="t" style="left:1324px;top:709.10px;font-size:15px;font-style:italic;color:#5f6368">Case studies</div>
<div class="a" style="left:41px;top:209px;width:1.5px;height:520px;background:#254b3b"></div>
<div class="a" style="left:1854px;top:208.5px;width:6px;height:43px;background:#fff"></div>
<div class="a" style="left:1853.5px;top:257px;width:7px;height:472px;background:#fff"></div>
<div class="a" style="left:1853px;top:257px;width:1.2px;height:472px;background:#2f5e4a"></div>
<div class="a" style="left:1854px;top:289.40px;width:6px;height:1px;background:#e2e3e3"></div>
<div class="a" style="left:1854px;top:323.40px;width:6px;height:1px;background:#e2e3e3"></div>
<div class="a" style="left:1854px;top:357.40px;width:6px;height:1px;background:#e2e3e3"></div>
<div class="a" style="left:1854px;top:391.40px;width:6px;height:1px;background:#e2e3e3"></div>
<div class="a" style="left:1854px;top:425.40px;width:6px;height:1px;background:#e2e3e3"></div>
<div class="a" style="left:1854px;top:459.40px;width:6px;height:1px;background:#e2e3e3"></div>
<div class="a" style="left:1854px;top:493.40px;width:6px;height:1px;background:#e2e3e3"></div>
<div class="a" style="left:1854px;top:527.40px;width:6px;height:1px;background:#e2e3e3"></div>
<div class="a" style="left:1854px;top:561.40px;width:6px;height:1px;background:#e2e3e3"></div>
<div class="a" style="left:1854px;top:595.40px;width:6px;height:1px;background:#e2e3e3"></div>
<div class="a" style="left:1854px;top:629.40px;width:6px;height:1px;background:#e2e3e3"></div>
<div class="a" style="left:1854px;top:663.40px;width:6px;height:1px;background:#e2e3e3"></div>
<div class="a" style="left:1854px;top:697.40px;width:6px;height:1px;background:#e2e3e3"></div>
<div class="a" style="left:1854px;top:731.40px;width:6px;height:1px;background:#e2e3e3"></div>
<div class="a" style="left:200px;top:257px;width:1.3px;height:472px;background:#1a73e8"></div>
<div class="a" style="left:380.8px;top:257px;width:1.3px;height:472px;background:#1a73e8"></div>
<div class="a" style="left:200px;top:257px;width:182px;height:33.4px;border:2px solid #1a73e8;border-top:none"></div></body></html>
